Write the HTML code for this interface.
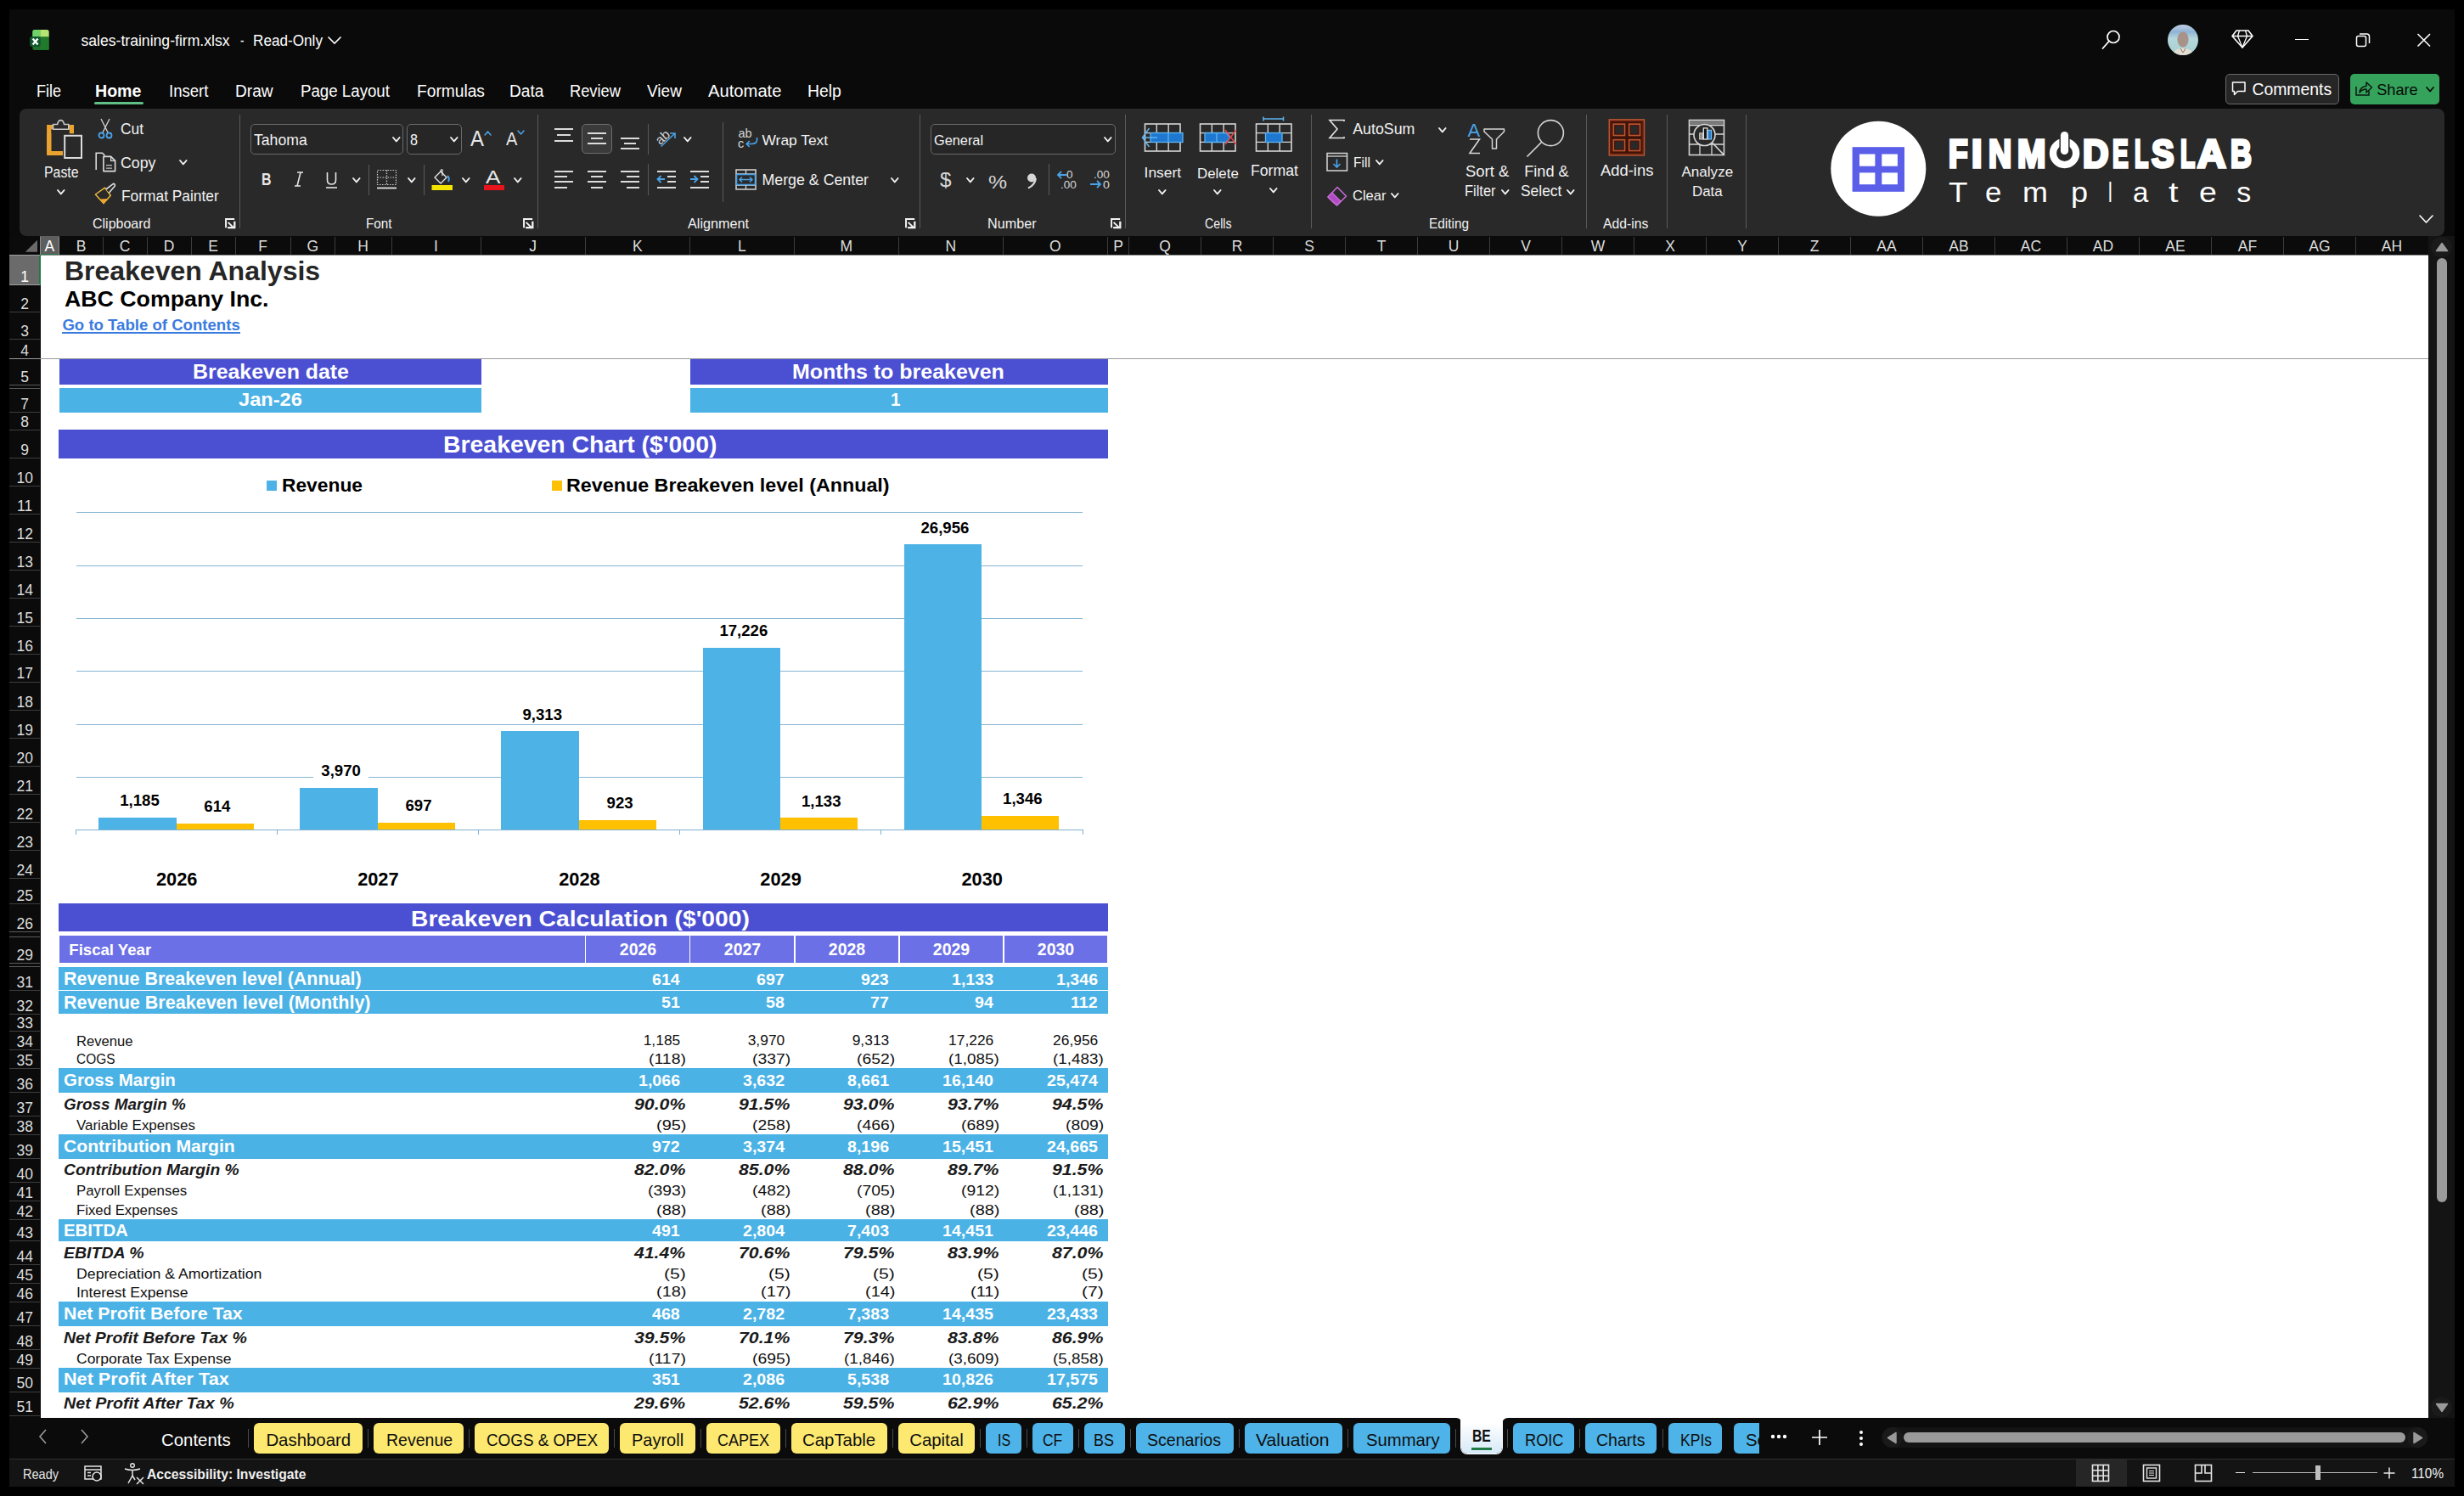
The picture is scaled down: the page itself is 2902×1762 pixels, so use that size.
<!DOCTYPE html>
<html><head><meta charset="utf-8"><title>sales-training-firm.xlsx</title>
<style>
html,body{margin:0;padding:0;width:2902px;height:1762px;overflow:hidden;background:#000;}
body{position:relative;font-family:"Liberation Sans",sans-serif;}
.t{position:absolute;white-space:nowrap;line-height:1;}
.r{position:absolute;}
.s{position:absolute;overflow:visible;}
</style></head><body>
<div class="r" style="left:11.00px;top:11.00px;width:2880.00px;height:1739.00px;background:#0a0a0a;"></div>
<svg class="s" style="left:34.00px;top:34.00px;" width="26.00" height="27.00" viewBox="0 0 26.00 27.00"><rect x="4.3" y="0.9" width="19.3" height="24" rx="2.5" fill="#1f6e2a"/><path d="M4.3 3.4 Q4.3 0.9 6.8 0.9 H13.3 V9.4 H4.3 Z" fill="#6fd36a"/><path d="M13.3 0.9 H21.1 Q23.6 0.9 23.6 3.4 V9.4 H13.3 Z" fill="#b5e673"/><rect x="13.3" y="9.4" width="10.3" height="15.5" fill="#217a2c"/><rect x="1.2" y="9" width="12.5" height="12" rx="2.2" fill="#10572f"/><path d="M4.6 11.4 L10.6 18.6 M10.6 11.4 L4.6 18.6" stroke="#f4fff6" stroke-width="2.4" stroke-linecap="butt"/></svg>
<div class="t" style="left:95.50px;top:39.80px;font-size:17.6px;color:#ffffff;">sales-training-firm.xlsx</div>
<div class="t" style="left:282.50px;top:39.80px;font-size:17.6px;color:#ffffff;transform-origin:0.00px 0;transform:scaleX(0.7632);">-</div>
<div class="t" style="left:298.40px;top:39.80px;font-size:17.6px;color:#ffffff;transform-origin:0.00px 0;transform:scaleX(0.9747);">Read-Only</div>
<svg class="s" style="left:384.00px;top:41.00px;" width="20.00" height="13.00" viewBox="0 0 20.00 13.00"><polyline points="2.5,2.5 10,10 17.5,2.5" fill="none" stroke="#fff" stroke-width="1.6"/></svg>
<svg class="s" style="left:2474.00px;top:34.00px;" width="25.00" height="26.00" viewBox="0 0 25.00 26.00"><circle cx="15" cy="9.5" r="7" fill="none" stroke="#fff" stroke-width="1.7"/><line x1="10" y1="14.5" x2="2.5" y2="23" stroke="#fff" stroke-width="1.8" stroke-linecap="round"/></svg>
<svg class="s" style="left:2552.00px;top:28.00px;" width="38.00" height="38.00" viewBox="0 0 38.00 38.00"><defs><clipPath id="avc"><circle cx="19" cy="19" r="18"/></clipPath><linearGradient id="avg" x1="0" y1="0" x2="0" y2="1"><stop offset="0" stop-color="#c9d3e6"/><stop offset="0.25" stop-color="#8fb3d6"/><stop offset="0.45" stop-color="#b4d6dc"/><stop offset="1" stop-color="#a6d0cf"/></linearGradient></defs><g clip-path="url(#avc)"><rect width="38" height="38" fill="url(#avg)"/><ellipse cx="19" cy="18.5" rx="6.6" ry="9.2" fill="#a8938a"/><path d="M6 38 Q8 29 19 28.5 Q30 29 32 38 Z" fill="#e2dcd2"/><path d="M16 29 L19 34 L22 29" fill="none" stroke="#8a7a6a" stroke-width="1"/></g></svg>
<svg class="s" style="left:2627.00px;top:33.00px;" width="28.00" height="26.00" viewBox="0 0 28.00 26.00"><path d="M7 3 H21 L26 9.5 L14 23 L2 9.5 Z" fill="none" stroke="#fff" stroke-width="1.6" stroke-linejoin="round"/><path d="M2 9.5 H26 M10.5 3 L8.5 9.5 L14 23 L19.5 9.5 L17.5 3" fill="none" stroke="#fff" stroke-width="1.3" stroke-linejoin="round"/></svg>
<div class="r" style="left:2703.00px;top:45.50px;width:15.50px;height:1.50px;background:#ffffff;"></div>
<svg class="s" style="left:2773.00px;top:37.00px;" width="20.00" height="20.00" viewBox="0 0 20.00 20.00"><rect x="2.5" y="5.5" width="11" height="12" rx="2" fill="none" stroke="#fff" stroke-width="1.5"/><path d="M6 3 H14.5 Q17.5 3 17.5 6 V14" fill="none" stroke="#fff" stroke-width="1.5"/></svg>
<svg class="s" style="left:2845.00px;top:38.00px;" width="20.00" height="19.00" viewBox="0 0 20.00 19.00"><path d="M2.5 2 L17 16.5 M17 2 L2.5 16.5" stroke="#fff" stroke-width="1.6"/></svg>
<div class="t" style="left:42.90px;top:98.17px;font-size:19.4px;color:#ffffff;transform-origin:0.00px 0;transform:scaleX(0.9317);">File</div>
<div class="t" style="left:111.70px;top:98.17px;font-size:19.4px;font-weight:bold;color:#ffffff;transform-origin:0.00px 0;transform:scaleX(1.0105);">Home</div>
<div class="t" style="left:198.75px;top:98.17px;font-size:19.4px;color:#ffffff;transform-origin:0.00px 0;transform:scaleX(0.9577);">Insert</div>
<div class="t" style="left:277.30px;top:98.17px;font-size:19.4px;color:#ffffff;transform-origin:0.00px 0;transform:scaleX(0.9868);">Draw</div>
<div class="t" style="left:353.60px;top:98.17px;font-size:19.4px;color:#ffffff;transform-origin:0.00px 0;transform:scaleX(0.9639);">Page Layout</div>
<div class="t" style="left:491.00px;top:98.17px;font-size:19.4px;color:#ffffff;transform-origin:0.00px 0;transform:scaleX(0.9889);">Formulas</div>
<div class="t" style="left:600.00px;top:98.17px;font-size:19.4px;color:#ffffff;transform-origin:0.00px 0;transform:scaleX(0.9846);">Data</div>
<div class="t" style="left:671.00px;top:98.17px;font-size:19.4px;color:#ffffff;transform-origin:0.00px 0;transform:scaleX(0.9429);">Review</div>
<div class="t" style="left:761.80px;top:98.17px;font-size:19.4px;color:#ffffff;transform-origin:0.00px 0;transform:scaleX(0.9806);">View</div>
<div class="t" style="left:834.00px;top:98.17px;font-size:19.4px;color:#ffffff;transform-origin:0.00px 0;transform:scaleX(1.0418);">Automate</div>
<div class="t" style="left:951.00px;top:98.17px;font-size:19.4px;color:#ffffff;">Help</div>
<div class="r" style="left:110.80px;top:120.20px;width:58.20px;height:2.80px;background:#5fbf85;border-radius:2px;"></div>
<div class="r" style="left:2620.80px;top:87.20px;width:134.50px;height:35.50px;background:#262626;border:1px solid #6a6a6a;border-radius:5px;box-sizing:border-box;"></div>
<svg class="s" style="left:2627.00px;top:94.00px;" width="20.00" height="22.00" viewBox="0 0 20.00 22.00"><path d="M2.5 3 H17 V13.5 H8.5 L4.5 17.5 V13.5 H2.5 Z" fill="none" stroke="#fff" stroke-width="1.5" stroke-linejoin="round"/></svg>
<div class="t" style="left:2652.40px;top:95.87px;font-size:19.4px;color:#ffffff;">Comments</div>
<div class="r" style="left:2768.00px;top:87.20px;width:105.10px;height:35.50px;background:#36a35c;border-radius:5px;"></div>
<svg class="s" style="left:2772.00px;top:93.00px;" width="24.00" height="22.00" viewBox="0 0 24.00 22.00"><path d="M3 9 V19 H18 V14" fill="none" stroke="#0a1a10" stroke-width="1.5"/><path d="M7 16 Q8 9 15 8.5 V4 L21.5 10 L15 16 V12 Q10 12 7 16 Z" fill="none" stroke="#0a1a10" stroke-width="1.5" stroke-linejoin="round"/></svg>
<div class="t" style="left:2799.20px;top:96.89px;font-size:18.2px;color:#050a07;">Share</div>
<svg class="s" style="left:2856.00px;top:101.25px;" width="12.00" height="8.50" viewBox="0 0 12.00 8.50"><polyline points="2,2 6.00,6.50 10.00,2" fill="none" stroke="#050a07" stroke-width="1.8" stroke-linecap="round" stroke-linejoin="round"/></svg>
<div class="r" style="left:23.00px;top:128.00px;width:2856.00px;height:150.00px;background:#292929;border-radius:8px;"></div>
<div class="r" style="left:282.00px;top:135.00px;width:1.00px;height:134.00px;background:#5a5a5a;"></div>
<div class="r" style="left:633.00px;top:135.00px;width:1.00px;height:134.00px;background:#5a5a5a;"></div>
<div class="r" style="left:1083.00px;top:135.00px;width:1.00px;height:134.00px;background:#5a5a5a;"></div>
<div class="r" style="left:1324.90px;top:135.00px;width:1.00px;height:134.00px;background:#5a5a5a;"></div>
<div class="r" style="left:1544.10px;top:135.00px;width:1.00px;height:134.00px;background:#5a5a5a;"></div>
<div class="r" style="left:1868.10px;top:135.00px;width:1.00px;height:134.00px;background:#5a5a5a;"></div>
<div class="r" style="left:1962.90px;top:135.00px;width:1.00px;height:134.00px;background:#5a5a5a;"></div>
<div class="r" style="left:2056.00px;top:135.00px;width:1.00px;height:134.00px;background:#5a5a5a;"></div>
<div class="t" style="left:108.80px;top:254.63px;font-size:16.5px;color:#f2f2f2;transform-origin:0.00px 0;transform:scaleX(0.9686);">Clipboard</div>
<div class="t" style="left:430.50px;top:254.63px;font-size:16.5px;color:#f2f2f2;transform-origin:0.00px 0;transform:scaleX(0.9242);">Font</div>
<div class="t" style="left:810.00px;top:254.63px;font-size:16.5px;color:#f2f2f2;transform-origin:0.00px 0;transform:scaleX(0.9817);">Alignment</div>
<div class="t" style="left:1163.40px;top:254.63px;font-size:16.5px;color:#f2f2f2;transform-origin:0.00px 0;transform:scaleX(0.9803);">Number</div>
<div class="t" style="left:1418.70px;top:254.63px;font-size:16.5px;color:#f2f2f2;transform-origin:0.00px 0;transform:scaleX(0.8607);">Cells</div>
<div class="t" style="left:1682.90px;top:254.63px;font-size:16.5px;color:#f2f2f2;transform-origin:0.00px 0;transform:scaleX(0.9309);">Editing</div>
<div class="t" style="left:1888.00px;top:254.63px;font-size:16.5px;color:#f2f2f2;transform-origin:0.00px 0;transform:scaleX(0.9529);">Add-ins</div>
<svg class="s" style="left:263.70px;top:255.60px;" width="16.00" height="16.00" viewBox="0 0 16.00 16.00"><path d="M2.05 12.35 V1.95 H12.15" fill="none" stroke="#f2f2f2" stroke-width="2"/><path d="M12.3 4.75 V12.2 H4.15" fill="none" stroke="#f2f2f2" stroke-width="2.3"/><path d="M4.65 5.85 L11.6 12.6" fill="none" stroke="#f2f2f2" stroke-width="2"/></svg>
<svg class="s" style="left:615.00px;top:256.00px;" width="16.00" height="16.00" viewBox="0 0 16.00 16.00"><path d="M2.05 12.35 V1.95 H12.15" fill="none" stroke="#f2f2f2" stroke-width="2"/><path d="M12.3 4.75 V12.2 H4.15" fill="none" stroke="#f2f2f2" stroke-width="2.3"/><path d="M4.65 5.85 L11.6 12.6" fill="none" stroke="#f2f2f2" stroke-width="2"/></svg>
<svg class="s" style="left:1065.00px;top:256.00px;" width="16.00" height="16.00" viewBox="0 0 16.00 16.00"><path d="M2.05 12.35 V1.95 H12.15" fill="none" stroke="#f2f2f2" stroke-width="2"/><path d="M12.3 4.75 V12.2 H4.15" fill="none" stroke="#f2f2f2" stroke-width="2.3"/><path d="M4.65 5.85 L11.6 12.6" fill="none" stroke="#f2f2f2" stroke-width="2"/></svg>
<svg class="s" style="left:1307.00px;top:256.00px;" width="16.00" height="16.00" viewBox="0 0 16.00 16.00"><path d="M2.05 12.35 V1.95 H12.15" fill="none" stroke="#f2f2f2" stroke-width="2"/><path d="M12.3 4.75 V12.2 H4.15" fill="none" stroke="#f2f2f2" stroke-width="2.3"/><path d="M4.65 5.85 L11.6 12.6" fill="none" stroke="#f2f2f2" stroke-width="2"/></svg>
<svg class="s" style="left:50.00px;top:136.00px;" width="50.00" height="54.00" viewBox="0 0 50.00 54.00"><path d="M7.7 21.3 V44.5 H24" fill="none" stroke="#eba32f" stroke-width="5.2"/><path d="M7.7 44.5 V13.6 H14 M31 13.6 H34.4 V21.3" fill="none" stroke="#eba32f" stroke-width="5.2"/><path d="M12.5 16.3 V10.5 H17.6 Q18.5 5.6 21.6 5.6 Q24.7 5.6 25.6 10.5 H30.8 V16.3 Z" fill="#292929" stroke="#c8c8c8" stroke-width="1.6" stroke-linejoin="round"/><rect x="26.2" y="23.8" width="19.8" height="26.2" fill="#292929" stroke="#dcdcdc" stroke-width="2"/></svg>
<div class="t" style="left:51.50px;top:194.68px;font-size:17.5px;color:#f2f2f2;transform-origin:0.00px 0;transform:scaleX(0.9058);">Paste</div>
<svg class="s" style="left:65.70px;top:222.30px;" width="11.60" height="8.40" viewBox="0 0 11.60 8.40"><polyline points="2,2 5.80,6.40 9.60,2" fill="none" stroke="#f2f2f2" stroke-width="1.9" stroke-linecap="round" stroke-linejoin="round"/></svg>
<svg class="s" style="left:113.00px;top:138.00px;" width="22.00" height="28.00" viewBox="0 0 22.00 28.00"><path d="M6 2 L14 18 M16 2 L8 18" stroke="#d6d6d6" stroke-width="1.3"/><circle cx="6.5" cy="21.5" r="3" fill="none" stroke="#4aa3e8" stroke-width="1.8"/><circle cx="15.5" cy="21.5" r="3" fill="none" stroke="#4aa3e8" stroke-width="1.8"/></svg>
<div class="t" style="left:142.00px;top:144.18px;font-size:17.5px;color:#f2f2f2;transform-origin:0.00px 0;transform:scaleX(0.9922);">Cut</div>
<svg class="s" style="left:110.00px;top:177.00px;" width="28.00" height="28.00" viewBox="0 0 28.00 28.00"><path d="M3.2 23 V3.2 H10.5 L13.5 6.2" fill="none" stroke="#dcdcdc" stroke-width="1.6"/><path d="M11.9 7.4 H20.6 L25.6 12.4 V24.6 H11.9 Z" fill="#292929" stroke="#dcdcdc" stroke-width="1.6" stroke-linejoin="round"/><path d="M20.6 7.4 V12.4 H25.6" fill="none" stroke="#dcdcdc" stroke-width="1.2"/><path d="M15 17.7 H22 M15 21.1 H22" stroke="#bdbdbd" stroke-width="1.3"/></svg>
<div class="t" style="left:142.00px;top:183.78px;font-size:17.5px;color:#f2f2f2;transform-origin:0.00px 0;transform:scaleX(1.0156);">Copy</div>
<svg class="s" style="left:209.60px;top:186.80px;" width="11.60" height="8.40" viewBox="0 0 11.60 8.40"><polyline points="2,2 5.80,6.40 9.60,2" fill="none" stroke="#f2f2f2" stroke-width="1.9" stroke-linecap="round" stroke-linejoin="round"/></svg>
<svg class="s" style="left:108.00px;top:214.00px;" width="30.00" height="30.00" viewBox="0 0 30.00 30.00"><path d="M4.4 15 L15.5 7.1 L22.3 16.2 L14 25.6 Z" fill="#292929" stroke="#f0b93c" stroke-width="1.5" stroke-linejoin="round"/><path d="M9 20.5 L18.8 20 L14 25.6 Z" fill="#eba32f"/><path d="M16.8 9 L25.5 2.4 Q27.6 2.4 27.3 4.9 L20.5 13" fill="#292929" stroke="#dcdcdc" stroke-width="1.6" stroke-linejoin="round"/></svg>
<div class="t" style="left:142.60px;top:222.68px;font-size:17.5px;color:#f2f2f2;transform-origin:0.00px 0;transform:scaleX(0.9917);">Format Painter</div>
<div class="r" style="left:295.30px;top:146.40px;width:180.20px;height:35.50px;background:#262626;border:1px solid #6a6a6a;border-radius:5px;box-sizing:border-box;"></div>
<div class="t" style="left:299.00px;top:156.64px;font-size:17.9px;color:#f2f2f2;transform-origin:0.00px 0;transform:scaleX(0.9855);">Tahoma</div>
<svg class="s" style="left:461.20px;top:160.30px;" width="11.60" height="8.40" viewBox="0 0 11.60 8.40"><polyline points="2,2 5.80,6.40 9.60,2" fill="none" stroke="#f2f2f2" stroke-width="1.9" stroke-linecap="round" stroke-linejoin="round"/></svg>
<div class="r" style="left:479.40px;top:146.40px;width:64.30px;height:35.50px;background:#262626;border:1px solid #6a6a6a;border-radius:5px;box-sizing:border-box;"></div>
<div class="t" style="left:482.50px;top:156.64px;font-size:17.9px;color:#f2f2f2;transform-origin:0.00px 0;transform:scaleX(0.9059);">8</div>
<svg class="s" style="left:529.20px;top:160.30px;" width="11.60" height="8.40" viewBox="0 0 11.60 8.40"><polyline points="2,2 5.80,6.40 9.60,2" fill="none" stroke="#f2f2f2" stroke-width="1.9" stroke-linecap="round" stroke-linejoin="round"/></svg>
<div class="t" style="left:554.00px;top:149.59px;font-size:26px;color:#e6e6e6;transform-origin:0.00px 0;transform:scaleX(0.9185);">A</div>
<svg class="s" style="left:568.50px;top:152.50px;" width="11.00" height="8.00" viewBox="0 0 11.00 8.00"><polyline points="2,6 5.50,2 9.00,6" fill="none" stroke="#4aa3e8" stroke-width="1.5" stroke-linecap="round" stroke-linejoin="round"/></svg>
<div class="t" style="left:595.60px;top:152.97px;font-size:22px;color:#e6e6e6;transform-origin:0.00px 0;transform:scaleX(0.9091);">A</div>
<svg class="s" style="left:608.00px;top:151.50px;" width="11.00" height="8.00" viewBox="0 0 11.00 8.00"><polyline points="2,2 5.50,6.00 9.00,2" fill="none" stroke="#4aa3e8" stroke-width="1.5" stroke-linecap="round" stroke-linejoin="round"/></svg>
<div class="t" style="left:307.50px;top:201.47px;font-size:20px;font-weight:bold;color:#e6e6e6;transform-origin:0.00px 0;transform:scaleX(0.7986);">B</div>
<svg class="s" style="left:345.00px;top:201.00px;" width="14.00" height="20.00" viewBox="0 0 14.00 20.00"><path d="M5 2 H12 M2 18 H9 M9 2 L5 18" fill="none" stroke="#e6e6e6" stroke-width="1.6"/></svg>
<svg class="s" style="left:382.00px;top:201.00px;" width="17.00" height="22.00" viewBox="0 0 17.00 22.00"><path d="M3.5 2 V11 Q3.5 16 8.5 16 Q13.5 16 13.5 11 V2" fill="none" stroke="#e6e6e6" stroke-width="1.6"/><path d="M2 20 H15" stroke="#e6e6e6" stroke-width="1.6"/></svg>
<svg class="s" style="left:413.70px;top:208.30px;" width="11.60" height="8.40" viewBox="0 0 11.60 8.40"><polyline points="2,2 5.80,6.40 9.60,2" fill="none" stroke="#f2f2f2" stroke-width="1.9" stroke-linecap="round" stroke-linejoin="round"/></svg>
<div class="r" style="left:433.90px;top:194.00px;width:1.00px;height:36.00px;background:#5a5a5a;"></div>
<svg class="s" style="left:442.00px;top:198.00px;" width="27.00" height="27.00" viewBox="0 0 27.00 27.00"><rect x="2.5" y="2.5" width="22" height="17" fill="none" stroke="#cfcfcf" stroke-width="1.2" stroke-dasharray="1.5 1.5"/><path d="M13.5 2.5 V19.5 M2.5 11 H24.5" stroke="#cfcfcf" stroke-width="1.2" stroke-dasharray="1.5 1.5"/><path d="M2 23.5 H25" stroke="#e6e6e6" stroke-width="1.8"/></svg>
<svg class="s" style="left:478.50px;top:208.30px;" width="11.60" height="8.40" viewBox="0 0 11.60 8.40"><polyline points="2,2 5.80,6.40 9.60,2" fill="none" stroke="#f2f2f2" stroke-width="1.9" stroke-linecap="round" stroke-linejoin="round"/></svg>
<div class="r" style="left:499.10px;top:194.00px;width:1.00px;height:36.00px;background:#5a5a5a;"></div>
<svg class="s" style="left:506.00px;top:198.00px;" width="30.00" height="28.00" viewBox="0 0 30.00 28.00"><path d="M6 11 L13 4 L20 11 L13 18 Z" fill="none" stroke="#e6e6e6" stroke-width="1.4" stroke-linejoin="round"/><path d="M13 4 Q13 1 15 2 V9" fill="none" stroke="#e6e6e6" stroke-width="1.2"/><path d="M21 9 Q24 12 22 16" fill="none" stroke="#4aa3e8" stroke-width="2"/><rect x="2.5" y="20" width="24.5" height="6" fill="#f5e400"/></svg>
<svg class="s" style="left:543.20px;top:208.30px;" width="11.60" height="8.40" viewBox="0 0 11.60 8.40"><polyline points="2,2 5.80,6.40 9.60,2" fill="none" stroke="#f2f2f2" stroke-width="1.9" stroke-linecap="round" stroke-linejoin="round"/></svg>
<div class="t" style="left:571.50px;top:197.87px;font-size:22px;color:#e6e6e6;transform-origin:0.00px 0;transform:scaleX(1.1872);">A</div>
<div class="r" style="left:570.00px;top:217.70px;width:24.00px;height:6.50px;background:#e8141c;"></div>
<svg class="s" style="left:604.20px;top:208.30px;" width="11.60" height="8.40" viewBox="0 0 11.60 8.40"><polyline points="2,2 5.80,6.40 9.60,2" fill="none" stroke="#f2f2f2" stroke-width="1.9" stroke-linecap="round" stroke-linejoin="round"/></svg>
<div class="r" style="left:653.00px;top:151.00px;width:22.00px;height:2.00px;background:#dcdcdc;"></div>
<div class="r" style="left:656.00px;top:158.00px;width:16.00px;height:2.00px;background:#dcdcdc;"></div>
<div class="r" style="left:653.00px;top:165.00px;width:22.00px;height:2.00px;background:#dcdcdc;"></div>
<div class="r" style="left:685.40px;top:146.20px;width:35.60px;height:35.10px;background:#3a3a3a;border:1px solid #6e6e6e;border-radius:5px;box-sizing:border-box;"></div>
<div class="r" style="left:692.00px;top:156.00px;width:22.00px;height:2.00px;background:#dcdcdc;"></div>
<div class="r" style="left:696.00px;top:162.00px;width:14.00px;height:2.00px;background:#dcdcdc;"></div>
<div class="r" style="left:692.00px;top:168.00px;width:22.00px;height:2.00px;background:#dcdcdc;"></div>
<div class="r" style="left:731.00px;top:162.00px;width:22.00px;height:2.00px;background:#dcdcdc;"></div>
<div class="r" style="left:735.00px;top:168.00px;width:14.00px;height:2.00px;background:#dcdcdc;"></div>
<div class="r" style="left:731.00px;top:174.00px;width:22.00px;height:2.00px;background:#dcdcdc;"></div>
<div class="r" style="left:763.00px;top:146.00px;width:1.00px;height:36.00px;background:#5a5a5a;"></div>
<svg class="s" style="left:770.00px;top:148.00px;" width="32.00" height="30.00" viewBox="0 0 32.00 30.00"><text x="1" y="19.5" font-family="Liberation Sans" font-size="15.5" fill="#d6d6d6" transform="rotate(-42 9 13)">ab</text><path d="M8.5 24.5 L25 9 M19 9 H25 V15" fill="none" stroke="#4aa3e8" stroke-width="1.6"/></svg>
<svg class="s" style="left:804.20px;top:159.80px;" width="11.60" height="8.40" viewBox="0 0 11.60 8.40"><polyline points="2,2 5.80,6.40 9.60,2" fill="none" stroke="#f2f2f2" stroke-width="1.9" stroke-linecap="round" stroke-linejoin="round"/></svg>
<div class="r" style="left:851.10px;top:144.00px;width:1.00px;height:94.00px;background:#5a5a5a;"></div>
<svg class="s" style="left:868.00px;top:150.00px;" width="28.00" height="28.00" viewBox="0 0 28.00 28.00"><text x="1.5" y="12" font-family="Liberation Sans" font-size="14.5" fill="#d6d6d6">ab</text><text x="1" y="23.5" font-family="Liberation Sans" font-size="14.5" fill="#d6d6d6">c</text><path d="M23.5 12 Q25 19.5 17 19.5 H11.5 M14.8 16 L11.3 19.5 L14.8 23" fill="none" stroke="#4aa3e8" stroke-width="1.7"/></svg>
<div class="t" style="left:897.50px;top:156.77px;font-size:17.4px;color:#f2f2f2;">Wrap Text</div>
<div class="r" style="left:653.00px;top:201.00px;width:22.00px;height:2.00px;background:#dcdcdc;"></div>
<div class="r" style="left:653.00px;top:207.00px;width:15.00px;height:2.00px;background:#dcdcdc;"></div>
<div class="r" style="left:653.00px;top:213.00px;width:22.00px;height:2.00px;background:#dcdcdc;"></div>
<div class="r" style="left:653.00px;top:220.00px;width:15.00px;height:2.00px;background:#dcdcdc;"></div>
<div class="r" style="left:692.00px;top:201.00px;width:22.00px;height:2.00px;background:#dcdcdc;"></div>
<div class="r" style="left:696.00px;top:207.00px;width:14.00px;height:2.00px;background:#dcdcdc;"></div>
<div class="r" style="left:692.00px;top:213.00px;width:22.00px;height:2.00px;background:#dcdcdc;"></div>
<div class="r" style="left:696.00px;top:220.00px;width:14.00px;height:2.00px;background:#dcdcdc;"></div>
<div class="r" style="left:731.00px;top:201.00px;width:22.00px;height:2.00px;background:#dcdcdc;"></div>
<div class="r" style="left:738.00px;top:207.00px;width:15.00px;height:2.00px;background:#dcdcdc;"></div>
<div class="r" style="left:731.00px;top:213.00px;width:22.00px;height:2.00px;background:#dcdcdc;"></div>
<div class="r" style="left:738.00px;top:220.00px;width:15.00px;height:2.00px;background:#dcdcdc;"></div>
<div class="r" style="left:763.00px;top:193.00px;width:1.00px;height:37.00px;background:#5a5a5a;"></div>
<div class="r" style="left:774.00px;top:201.00px;width:22.00px;height:2.00px;background:#dcdcdc;"></div>
<div class="r" style="left:774.00px;top:220.00px;width:22.00px;height:2.00px;background:#dcdcdc;"></div>
<div class="r" style="left:786.00px;top:207.00px;width:10.00px;height:2.00px;background:#dcdcdc;"></div>
<div class="r" style="left:786.00px;top:213.00px;width:10.00px;height:2.00px;background:#dcdcdc;"></div>
<svg class="s" style="left:772.00px;top:205.00px;" width="14.00" height="12.00" viewBox="0 0 14.00 12.00"><path d="M11 6 H2.5 M6.5 2 L2.5 6 L6.5 10" fill="none" stroke="#4aa3e8" stroke-width="1.8"/></svg>
<div class="r" style="left:813.00px;top:201.00px;width:22.00px;height:2.00px;background:#dcdcdc;"></div>
<div class="r" style="left:813.00px;top:220.00px;width:22.00px;height:2.00px;background:#dcdcdc;"></div>
<div class="r" style="left:825.00px;top:207.00px;width:10.00px;height:2.00px;background:#dcdcdc;"></div>
<div class="r" style="left:825.00px;top:213.00px;width:10.00px;height:2.00px;background:#dcdcdc;"></div>
<svg class="s" style="left:811.00px;top:205.00px;" width="14.00" height="12.00" viewBox="0 0 14.00 12.00"><path d="M2 6 H10.5 M6.5 2 L10.5 6 L6.5 10" fill="none" stroke="#4aa3e8" stroke-width="1.8"/></svg>
<svg class="s" style="left:865.00px;top:198.00px;" width="27.00" height="27.00" viewBox="0 0 27.00 27.00"><rect x="2" y="2" width="23" height="23" fill="none" stroke="#d6d6d6" stroke-width="1.5"/><path d="M2 7 H25 M2 20 H25 M13.5 2 V7 M13.5 20 V25" stroke="#d6d6d6" stroke-width="1.3"/><rect x="2.5" y="7.5" width="22" height="12" fill="none" stroke="#4aa3e8" stroke-width="1.6"/><path d="M6 13.5 H21 M9 10.5 L6 13.5 L9 16.5 M18 10.5 L21 13.5 L18 16.5" fill="none" stroke="#4aa3e8" stroke-width="1.5"/></svg>
<div class="t" style="left:897.50px;top:204.23px;font-size:17.8px;color:#f2f2f2;">Merge &amp; Center</div>
<svg class="s" style="left:1047.90px;top:208.30px;" width="11.60" height="8.40" viewBox="0 0 11.60 8.40"><polyline points="2,2 5.80,6.40 9.60,2" fill="none" stroke="#f2f2f2" stroke-width="1.9" stroke-linecap="round" stroke-linejoin="round"/></svg>
<div class="r" style="left:1096.00px;top:146.40px;width:217.70px;height:35.30px;background:#262626;border:1px solid #6a6a6a;border-radius:5px;box-sizing:border-box;"></div>
<div class="t" style="left:1099.50px;top:157.11px;font-size:17px;color:#f2f2f2;transform-origin:0.00px 0;transform:scaleX(0.9600);">General</div>
<svg class="s" style="left:1299.20px;top:160.30px;" width="11.60" height="8.40" viewBox="0 0 11.60 8.40"><polyline points="2,2 5.80,6.40 9.60,2" fill="none" stroke="#f2f2f2" stroke-width="1.9" stroke-linecap="round" stroke-linejoin="round"/></svg>
<div class="t" style="left:1106.50px;top:200.18px;font-size:24px;color:#d6d6d6;transform-origin:0.00px 0;transform:scaleX(1.0135);">$</div>
<svg class="s" style="left:1136.50px;top:208.10px;" width="11.60" height="8.40" viewBox="0 0 11.60 8.40"><polyline points="2,2 5.80,6.40 9.60,2" fill="none" stroke="#f2f2f2" stroke-width="1.9" stroke-linecap="round" stroke-linejoin="round"/></svg>
<div class="t" style="left:1163.90px;top:203.87px;font-size:22px;color:#d6d6d6;transform-origin:0.00px 0;transform:scaleX(1.1287);">%</div>
<svg class="s" style="left:1206.00px;top:200.00px;" width="18.00" height="24.00" viewBox="0 0 18.00 24.00"><circle cx="9" cy="9.5" r="5" fill="#d6d6d6"/><path d="M13.8 10 Q13 18 5 21.5" fill="none" stroke="#d6d6d6" stroke-width="2.4"/></svg>
<div class="r" style="left:1234.80px;top:193.00px;width:1.00px;height:37.00px;background:#5a5a5a;"></div>
<div class="t" style="left:1256.00px;top:200.42px;font-size:12.5px;color:#d6d6d6;transform-origin:0.00px 0;transform:scaleX(1.0811);">0</div>
<div class="t" style="left:1249.00px;top:212.42px;font-size:12.5px;color:#d6d6d6;transform-origin:0.00px 0;transform:scaleX(1.0820);">.00</div>
<svg class="s" style="left:1243.00px;top:200.00px;" width="16.00" height="12.00" viewBox="0 0 16.00 12.00"><path d="M14 6 H3 M7 2 L3 6 L7 10" fill="none" stroke="#4aa3e8" stroke-width="1.8"/></svg>
<div class="t" style="left:1288.00px;top:200.42px;font-size:12.5px;color:#d6d6d6;transform-origin:0.00px 0;transform:scaleX(1.0878);">.00</div>
<div class="t" style="left:1299.00px;top:212.42px;font-size:12.5px;color:#d6d6d6;transform-origin:0.00px 0;transform:scaleX(1.1387);">0</div>
<svg class="s" style="left:1282.00px;top:211.00px;" width="18.00" height="12.00" viewBox="0 0 18.00 12.00"><path d="M2 6 H14 M10 2 L14 6 L10 10" fill="none" stroke="#4aa3e8" stroke-width="1.8"/></svg>
<svg class="s" style="left:1343.00px;top:143.00px;" width="53.00" height="38.00" viewBox="0 0 53.00 38.00"><rect x="5.5" y="3" width="41.5" height="32" fill="none" stroke="#d6d6d6" stroke-width="1.6"/><path d="M19.33 3 V35 M5.5 13.67 H47.0" stroke="#d6d6d6" stroke-width="1.4"/><path d="M33.17 3 V35 M5.5 24.33 H47.0" stroke="#d6d6d6" stroke-width="1.4"/><rect x="12" y="13.5" width="38" height="11" fill="#1e78d0" stroke="#5fb4f0" stroke-width="1.3"/><path d="M33 13.5 V24.5" stroke="#5fb4f0" stroke-width="1.3"/><path d="M20 19 H3 M10.5 8 L2.5 19 L10.5 30" fill="none" stroke="#5fb4f0" stroke-width="1.5"/></svg>
<div class="t" style="left:1347.60px;top:195.27px;font-size:17.4px;color:#f2f2f2;">Insert</div>
<svg class="s" style="left:1362.80px;top:221.80px;" width="11.60" height="8.40" viewBox="0 0 11.60 8.40"><polyline points="2,2 5.80,6.40 9.60,2" fill="none" stroke="#f2f2f2" stroke-width="1.9" stroke-linecap="round" stroke-linejoin="round"/></svg>
<svg class="s" style="left:1411.00px;top:143.00px;" width="50.00" height="38.00" viewBox="0 0 50.00 38.00"><rect x="2.5" y="3" width="41.5" height="32" fill="none" stroke="#d6d6d6" stroke-width="1.6"/><path d="M16.33 3 V35 M2.5 13.67 H44.0" stroke="#d6d6d6" stroke-width="1.4"/><path d="M30.17 3 V35 M2.5 24.33 H44.0" stroke="#d6d6d6" stroke-width="1.4"/><path d="M8 13.5 H33 L38 19 L33 24.5 H8 Z" fill="#1e78d0" stroke="#5fb4f0" stroke-width="1.3"/><path d="M22 13.5 V24.5" stroke="#5fb4f0" stroke-width="1.3"/><path d="M32 10 L45 27 M45 10 L32 27" stroke="#e0454a" stroke-width="1.6"/></svg>
<div class="t" style="left:1410.00px;top:195.61px;font-size:17px;color:#f2f2f2;transform-origin:0.00px 0;transform:scaleX(0.9933);">Delete</div>
<svg class="s" style="left:1427.50px;top:221.80px;" width="11.60" height="8.40" viewBox="0 0 11.60 8.40"><polyline points="2,2 5.80,6.40 9.60,2" fill="none" stroke="#f2f2f2" stroke-width="1.9" stroke-linecap="round" stroke-linejoin="round"/></svg>
<svg class="s" style="left:1477.00px;top:137.00px;" width="46.00" height="44.00" viewBox="0 0 46.00 44.00"><rect x="2.5" y="9" width="41.5" height="32" fill="none" stroke="#d6d6d6" stroke-width="1.6"/><path d="M16.33 9 V41 M2.5 19.67 H44.0" stroke="#d6d6d6" stroke-width="1.4"/><path d="M30.17 9 V41 M2.5 30.33 H44.0" stroke="#d6d6d6" stroke-width="1.4"/><rect x="13.5" y="19.5" width="19.5" height="11" fill="#1e78d0" stroke="#5fb4f0" stroke-width="1.3"/><path d="M11 3 H34.5 M11 0.5 V5.5 M34.5 0.5 V5.5" stroke="#5fb4f0" stroke-width="1.5"/></svg>
<div class="t" style="left:1472.90px;top:192.71px;font-size:17.7px;color:#f2f2f2;">Format</div>
<svg class="s" style="left:1493.60px;top:220.00px;" width="11.60" height="8.40" viewBox="0 0 11.60 8.40"><polyline points="2,2 5.80,6.40 9.60,2" fill="none" stroke="#f2f2f2" stroke-width="1.9" stroke-linecap="round" stroke-linejoin="round"/></svg>
<svg class="s" style="left:1563.00px;top:139.00px;" width="24.00" height="26.00" viewBox="0 0 24.00 26.00"><path d="M20 4 V2.5 H3 L12 13 L3 23.5 H20 V22" fill="none" stroke="#e6e6e6" stroke-width="1.6" stroke-linejoin="miter"/></svg>
<div class="t" style="left:1593.20px;top:143.73px;font-size:17.8px;color:#f2f2f2;">AutoSum</div>
<svg class="s" style="left:1693.20px;top:148.50px;" width="11.60" height="8.40" viewBox="0 0 11.60 8.40"><polyline points="2,2 5.80,6.40 9.60,2" fill="none" stroke="#f2f2f2" stroke-width="1.9" stroke-linecap="round" stroke-linejoin="round"/></svg>
<svg class="s" style="left:1561.00px;top:178.00px;" width="28.00" height="26.00" viewBox="0 0 28.00 26.00"><rect x="2" y="2.5" width="23.5" height="20.5" fill="none" stroke="#d6d6d6" stroke-width="1.5"/><path d="M2 6 H25.5" stroke="#d6d6d6" stroke-width="1.3"/><path d="M13.5 9.5 V19 M9.5 15 L13.5 19 L17.5 15" fill="none" stroke="#4aa3e8" stroke-width="1.7"/></svg>
<div class="t" style="left:1594.00px;top:182.81px;font-size:17px;color:#f2f2f2;transform-origin:0.00px 0;transform:scaleX(0.9135);">Fill</div>
<svg class="s" style="left:1618.60px;top:186.80px;" width="11.60" height="8.40" viewBox="0 0 11.60 8.40"><polyline points="2,2 5.80,6.40 9.60,2" fill="none" stroke="#f2f2f2" stroke-width="1.9" stroke-linecap="round" stroke-linejoin="round"/></svg>
<svg class="s" style="left:1561.00px;top:217.00px;" width="28.00" height="27.00" viewBox="0 0 28.00 27.00"><path d="M3 15 L9.5 21.5 L13.5 25 L24.5 14 L14 3.5 Z" fill="none" stroke="#c76bd6" stroke-width="1.6" stroke-linejoin="round"/><path d="M3 15 L8 10 L18 20 L13.5 24.5 Z" fill="#b04bc4" stroke="#c76bd6" stroke-width="1.2" stroke-linejoin="round"/></svg>
<div class="t" style="left:1593.00px;top:222.41px;font-size:17px;color:#f2f2f2;transform-origin:0.00px 0;transform:scaleX(0.9722);">Clear</div>
<svg class="s" style="left:1636.80px;top:226.40px;" width="11.60" height="8.40" viewBox="0 0 11.60 8.40"><polyline points="2,2 5.80,6.40 9.60,2" fill="none" stroke="#f2f2f2" stroke-width="1.9" stroke-linecap="round" stroke-linejoin="round"/></svg>
<svg class="s" style="left:1727.00px;top:140.00px;" width="48.00" height="44.00" viewBox="0 0 48.00 44.00"><text x="1.5" y="21" font-family="Liberation Sans" font-size="22" fill="#4aa3e8">A</text><path d="M4 24 H15.5 L4 40.5 H16" fill="none" stroke="#d6d6d6" stroke-width="1.6"/><path d="M21 12 H44.5 V15 L35.5 24 V35 H30.5 V24 L21 15 Z" fill="none" stroke="#d6d6d6" stroke-width="1.5" stroke-linejoin="round"/></svg>
<div class="t" style="left:1725.70px;top:192.71px;font-size:18.3px;color:#f2f2f2;transform-origin:0.00px 0;transform:scaleX(1.0084);">Sort &amp;</div>
<div class="t" style="left:1725.00px;top:217.38px;font-size:17.5px;color:#f2f2f2;transform-origin:0.00px 0;transform:scaleX(0.9395);">Filter</div>
<svg class="s" style="left:1766.70px;top:221.80px;" width="11.60" height="8.40" viewBox="0 0 11.60 8.40"><polyline points="2,2 5.80,6.40 9.60,2" fill="none" stroke="#f2f2f2" stroke-width="1.9" stroke-linecap="round" stroke-linejoin="round"/></svg>
<svg class="s" style="left:1795.00px;top:139.00px;" width="50.00" height="50.00" viewBox="0 0 50.00 50.00"><circle cx="31.4" cy="17.6" r="15" fill="none" stroke="#d6d6d6" stroke-width="1.6"/><path d="M20.5 28.5 L3.5 45.5" stroke="#d6d6d6" stroke-width="1.7"/></svg>
<div class="t" style="left:1795.20px;top:192.79px;font-size:18.2px;color:#f2f2f2;">Find &amp;</div>
<div class="t" style="left:1790.60px;top:217.13px;font-size:17.8px;color:#f2f2f2;transform-origin:0.00px 0;transform:scaleX(0.9781);">Select</div>
<svg class="s" style="left:1844.20px;top:221.80px;" width="11.60" height="8.40" viewBox="0 0 11.60 8.40"><polyline points="2,2 5.80,6.40 9.60,2" fill="none" stroke="#f2f2f2" stroke-width="1.9" stroke-linecap="round" stroke-linejoin="round"/></svg>
<svg class="s" style="left:1893.00px;top:138.00px;" width="47.00" height="48.00" viewBox="0 0 47.00 48.00"><rect x="2.4" y="3" width="41" height="41.7" fill="#3a1208" stroke="#bd5430" stroke-width="1.7"/><rect x="4.4" y="5" width="37" height="37.7" fill="none" stroke="#5c1c0c" stroke-width="1.6"/><rect x="7.3" y="8.2" width="13.2" height="13.3" fill="#292929" stroke="#bd5430" stroke-width="1.7"/><rect x="9.0" y="9.9" width="9.799999999999999" height="9.9" fill="none" stroke="#4a160a" stroke-width="1.2"/><rect x="25.7" y="8.2" width="12.8" height="13.3" fill="#292929" stroke="#bd5430" stroke-width="1.7"/><rect x="27.4" y="9.9" width="9.4" height="9.9" fill="none" stroke="#4a160a" stroke-width="1.2"/><rect x="7.3" y="26.7" width="13.2" height="12.8" fill="#292929" stroke="#bd5430" stroke-width="1.7"/><rect x="9.0" y="28.4" width="9.799999999999999" height="9.4" fill="none" stroke="#4a160a" stroke-width="1.2"/><rect x="25.7" y="26.7" width="12.8" height="12.8" fill="#292929" stroke="#bd5430" stroke-width="1.7"/><rect x="27.4" y="28.4" width="9.4" height="9.4" fill="none" stroke="#4a160a" stroke-width="1.2"/></svg>
<div class="t" style="left:1885.00px;top:191.92px;font-size:18.4px;color:#f2f2f2;">Add-ins</div>
<svg class="s" style="left:1987.00px;top:139.00px;" width="48.00" height="48.00" viewBox="0 0 48.00 48.00"><rect x="2.5" y="2.5" width="41" height="41" fill="none" stroke="#d6d6d6" stroke-width="1.6"/><rect x="3" y="3" width="40" height="4.5" fill="#7a7a7a"/><path d="M2.5 8.5 H43.5 M2.5 19 H43.5 M2.5 31 H43.5 M15 31 V43.5 M29 31 V43.5" stroke="#d6d6d6" stroke-width="1.3"/><circle cx="20.5" cy="20" r="12.5" fill="#292929" stroke="#d6d6d6" stroke-width="1.6"/><path d="M29.5 29 L43 43" stroke="#d6d6d6" stroke-width="1.8"/><rect x="14.6" y="17.8" width="4" height="7.2" fill="#8a8a8a" stroke="#d0d0d0" stroke-width="0.9"/><rect x="19.3" y="11.9" width="4.5" height="13.1" fill="#1a1a1a" stroke="#e6e6e6" stroke-width="1.3"/><rect x="24.6" y="14.3" width="4" height="10.7" fill="#1e7fd6" stroke="#8ecbf5" stroke-width="1"/></svg>
<div class="t" style="left:1980.40px;top:194.02px;font-size:17.1px;color:#f2f2f2;">Analyze</div>
<div class="t" style="left:1993.00px;top:217.59px;font-size:16.9px;color:#f2f2f2;">Data</div>
<svg class="s" style="left:2155.00px;top:141.00px;" width="115.00" height="116.00" viewBox="0 0 115.00 116.00"><circle cx="57.3" cy="57.7" r="56" fill="#ffffff"/><rect x="26.6" y="32.2" width="61.4" height="52.6" fill="#5a5ee8"/><rect x="35" y="40.5" width="18.4" height="14.2" fill="#fff"/><rect x="61.3" y="40.5" width="18.6" height="14.2" fill="#fff"/><rect x="35" y="62.4" width="18.4" height="13.8" fill="#fff"/><rect x="61.3" y="62.4" width="18.6" height="13.8" fill="#fff"/></svg>
<div class="t" style="left:2295.30px;top:157.41px;font-size:47px;font-weight:bold;color:#ffffff;transform-origin:0.00px 0;transform:scaleX(0.7883);-webkit-text-stroke:3.6px #fff;">F</div>
<div class="t" style="left:2321.50px;top:157.41px;font-size:47px;font-weight:bold;color:#ffffff;transform-origin:0.00px 0;transform:scaleX(0.9574);-webkit-text-stroke:3.6px #fff;">I</div>
<div class="t" style="left:2341.60px;top:157.41px;font-size:47px;font-weight:bold;color:#ffffff;transform-origin:0.00px 0;transform:scaleX(0.8008);-webkit-text-stroke:3.6px #fff;">N</div>
<div class="t" style="left:2376.30px;top:157.41px;font-size:47px;font-weight:bold;color:#ffffff;transform-origin:0.00px 0;transform:scaleX(0.8511);-webkit-text-stroke:3.6px #fff;">M</div>
<div class="t" style="left:2453.30px;top:157.41px;font-size:47px;font-weight:bold;color:#ffffff;transform-origin:0.00px 0;transform:scaleX(0.8983);-webkit-text-stroke:3.6px #fff;">D</div>
<div class="t" style="left:2488.10px;top:157.41px;font-size:47px;font-weight:bold;color:#ffffff;transform-origin:0.00px 0;transform:scaleX(0.5951);-webkit-text-stroke:3.6px #fff;">E</div>
<div class="t" style="left:2513.60px;top:157.41px;font-size:47px;font-weight:bold;color:#ffffff;transform-origin:0.00px 0;transform:scaleX(0.5685);-webkit-text-stroke:3.6px #fff;">L</div>
<div class="t" style="left:2534.30px;top:157.41px;font-size:47px;font-weight:bold;color:#ffffff;transform-origin:0.00px 0;transform:scaleX(0.8447);-webkit-text-stroke:3.6px #fff;">S</div>
<div class="t" style="left:2567.50px;top:157.41px;font-size:47px;font-weight:bold;color:#ffffff;transform-origin:0.00px 0;transform:scaleX(0.5999);-webkit-text-stroke:3.6px #fff;">L</div>
<div class="t" style="left:2587.60px;top:157.41px;font-size:47px;font-weight:bold;color:#ffffff;transform-origin:0.00px 0;transform:scaleX(0.9840);-webkit-text-stroke:3.6px #fff;">A</div>
<div class="t" style="left:2626.90px;top:157.41px;font-size:47px;font-weight:bold;color:#ffffff;transform-origin:0.00px 0;transform:scaleX(0.7329);-webkit-text-stroke:3.6px #fff;">B</div>
<svg class="s" style="left:2405.00px;top:148.00px;" width="54.00" height="56.00" viewBox="0 0 54.00 56.00"><circle cx="26.55" cy="32.45" r="13.6" fill="none" stroke="#fff" stroke-width="8.3"/><rect x="20.4" y="5.5" width="12.2" height="30" rx="6" fill="#292929"/><rect x="21.9" y="7" width="9.2" height="27" rx="4.6" fill="#fff"/></svg>
<div class="t" style="left:2295.00px;top:208.61px;font-size:34px;color:#ffffff;transform-origin:0.00px 0;transform:scaleX(1.0800);">T</div>
<div class="t" style="left:2338.20px;top:208.61px;font-size:34px;color:#ffffff;transform-origin:0.00px 0;transform:scaleX(1.0228);">e</div>
<div class="t" style="left:2382.20px;top:208.61px;font-size:34px;color:#ffffff;transform-origin:0.00px 0;transform:scaleX(1.0567);">m</div>
<div class="t" style="left:2438.50px;top:208.61px;font-size:34px;color:#ffffff;transform-origin:0.00px 0;transform:scaleX(1.0599);">p</div>
<div class="t" style="left:2483.20px;top:208.61px;font-size:34px;color:#ffffff;transform-origin:0.00px 0;transform:scaleX(0.6150);">l</div>
<div class="t" style="left:2511.70px;top:208.61px;font-size:34px;color:#ffffff;transform-origin:0.00px 0;transform:scaleX(0.9716);">a</div>
<div class="t" style="left:2554.10px;top:208.61px;font-size:34px;color:#ffffff;transform-origin:0.00px 0;transform:scaleX(1.2185);">t</div>
<div class="t" style="left:2589.60px;top:208.61px;font-size:34px;color:#ffffff;transform-origin:0.00px 0;transform:scaleX(1.1023);">e</div>
<div class="t" style="left:2634.30px;top:208.61px;font-size:34px;color:#ffffff;">s</div>
<svg class="s" style="left:2847.80px;top:251.50px;" width="19.00" height="12.00" viewBox="0 0 19.00 12.00"><polyline points="2,2 9.50,10.00 17.00,2" fill="none" stroke="#ffffff" stroke-width="1.6" stroke-linecap="round" stroke-linejoin="round"/></svg>
<div class="r" style="left:11.00px;top:278.00px;width:2849.00px;height:22.00px;background:#0b0b0b;"></div>
<svg class="s" style="left:28.00px;top:281.00px;" width="18.00" height="18.00" viewBox="0 0 18.00 18.00"><path d="M16 1.8 V15.7 H1.8 Z" fill="#6a6a6a"/></svg>
<div class="r" style="left:47.00px;top:278.00px;width:22.60px;height:22.00px;background:#5e5e5e;"></div>
<div class="r" style="left:47.00px;top:298.80px;width:22.60px;height:2.00px;background:#1f7a45;"></div>
<div class="t" style="left:52.44px;top:282.18px;font-size:17.5px;color:#ffffff;">A</div>
<div class="r" style="left:69.10px;top:279.00px;width:1.00px;height:21.00px;background:#8a8a8a;"></div>
<div class="t" style="left:89.63px;top:282.18px;font-size:17.5px;color:#dcdcdc;">B</div>
<div class="r" style="left:120.80px;top:279.00px;width:1.00px;height:21.00px;background:#3d3d3d;"></div>
<div class="t" style="left:140.85px;top:282.18px;font-size:17.5px;color:#dcdcdc;">C</div>
<div class="r" style="left:172.50px;top:279.00px;width:1.00px;height:21.00px;background:#3d3d3d;"></div>
<div class="t" style="left:192.85px;top:282.18px;font-size:17.5px;color:#dcdcdc;">D</div>
<div class="r" style="left:224.80px;top:279.00px;width:1.00px;height:21.00px;background:#3d3d3d;"></div>
<div class="t" style="left:245.33px;top:282.18px;font-size:17.5px;color:#dcdcdc;">E</div>
<div class="r" style="left:276.50px;top:279.00px;width:1.00px;height:21.00px;background:#3d3d3d;"></div>
<div class="t" style="left:304.31px;top:282.18px;font-size:17.5px;color:#dcdcdc;">F</div>
<div class="r" style="left:341.80px;top:279.00px;width:1.00px;height:21.00px;background:#3d3d3d;"></div>
<div class="t" style="left:361.48px;top:282.18px;font-size:17.5px;color:#dcdcdc;">G</div>
<div class="r" style="left:393.80px;top:279.00px;width:1.00px;height:21.00px;background:#3d3d3d;"></div>
<div class="t" style="left:421.35px;top:282.18px;font-size:17.5px;color:#dcdcdc;">H</div>
<div class="r" style="left:460.50px;top:279.00px;width:1.00px;height:21.00px;background:#3d3d3d;"></div>
<div class="t" style="left:511.05px;top:282.18px;font-size:17.5px;color:#dcdcdc;">I</div>
<div class="r" style="left:565.50px;top:279.00px;width:1.00px;height:21.00px;background:#3d3d3d;"></div>
<div class="t" style="left:623.33px;top:282.18px;font-size:17.5px;color:#dcdcdc;">J</div>
<div class="r" style="left:688.90px;top:279.00px;width:1.00px;height:21.00px;background:#3d3d3d;"></div>
<div class="t" style="left:745.08px;top:282.18px;font-size:17.5px;color:#dcdcdc;">K</div>
<div class="r" style="left:811.90px;top:279.00px;width:1.00px;height:21.00px;background:#3d3d3d;"></div>
<div class="t" style="left:869.04px;top:282.18px;font-size:17.5px;color:#dcdcdc;">L</div>
<div class="r" style="left:934.90px;top:279.00px;width:1.00px;height:21.00px;background:#3d3d3d;"></div>
<div class="t" style="left:989.59px;top:282.18px;font-size:17.5px;color:#dcdcdc;">M</div>
<div class="r" style="left:1057.90px;top:279.00px;width:1.00px;height:21.00px;background:#3d3d3d;"></div>
<div class="t" style="left:1113.60px;top:282.18px;font-size:17.5px;color:#dcdcdc;">N</div>
<div class="r" style="left:1180.90px;top:279.00px;width:1.00px;height:21.00px;background:#3d3d3d;"></div>
<div class="t" style="left:1236.08px;top:282.18px;font-size:17.5px;color:#dcdcdc;">O</div>
<div class="r" style="left:1303.90px;top:279.00px;width:1.00px;height:21.00px;background:#3d3d3d;"></div>
<div class="t" style="left:1311.13px;top:282.18px;font-size:17.5px;color:#dcdcdc;">P</div>
<div class="r" style="left:1329.00px;top:279.00px;width:1.00px;height:21.00px;background:#3d3d3d;"></div>
<div class="t" style="left:1365.17px;top:282.18px;font-size:17.5px;color:#dcdcdc;">Q</div>
<div class="r" style="left:1414.00px;top:279.00px;width:1.00px;height:21.00px;background:#3d3d3d;"></div>
<div class="t" style="left:1450.70px;top:282.18px;font-size:17.5px;color:#dcdcdc;">R</div>
<div class="r" style="left:1499.00px;top:279.00px;width:1.00px;height:21.00px;background:#3d3d3d;"></div>
<div class="t" style="left:1536.18px;top:282.18px;font-size:17.5px;color:#dcdcdc;">S</div>
<div class="r" style="left:1584.00px;top:279.00px;width:1.00px;height:21.00px;background:#3d3d3d;"></div>
<div class="t" style="left:1621.66px;top:282.18px;font-size:17.5px;color:#dcdcdc;">T</div>
<div class="r" style="left:1669.00px;top:279.00px;width:1.00px;height:21.00px;background:#3d3d3d;"></div>
<div class="t" style="left:1705.70px;top:282.18px;font-size:17.5px;color:#dcdcdc;">U</div>
<div class="r" style="left:1754.00px;top:279.00px;width:1.00px;height:21.00px;background:#3d3d3d;"></div>
<div class="t" style="left:1791.18px;top:282.18px;font-size:17.5px;color:#dcdcdc;">V</div>
<div class="r" style="left:1839.00px;top:279.00px;width:1.00px;height:21.00px;background:#3d3d3d;"></div>
<div class="t" style="left:1873.73px;top:282.18px;font-size:17.5px;color:#dcdcdc;">W</div>
<div class="r" style="left:1924.00px;top:279.00px;width:1.00px;height:21.00px;background:#3d3d3d;"></div>
<div class="t" style="left:1961.18px;top:282.18px;font-size:17.5px;color:#dcdcdc;">X</div>
<div class="r" style="left:2009.00px;top:279.00px;width:1.00px;height:21.00px;background:#3d3d3d;"></div>
<div class="t" style="left:2046.18px;top:282.18px;font-size:17.5px;color:#dcdcdc;">Y</div>
<div class="r" style="left:2094.00px;top:279.00px;width:1.00px;height:21.00px;background:#3d3d3d;"></div>
<div class="t" style="left:2131.66px;top:282.18px;font-size:17.5px;color:#dcdcdc;">Z</div>
<div class="r" style="left:2179.00px;top:279.00px;width:1.00px;height:21.00px;background:#3d3d3d;"></div>
<div class="t" style="left:2210.32px;top:282.18px;font-size:17.5px;color:#dcdcdc;">AA</div>
<div class="r" style="left:2264.00px;top:279.00px;width:1.00px;height:21.00px;background:#3d3d3d;"></div>
<div class="t" style="left:2295.32px;top:282.18px;font-size:17.5px;color:#dcdcdc;">AB</div>
<div class="r" style="left:2349.00px;top:279.00px;width:1.00px;height:21.00px;background:#3d3d3d;"></div>
<div class="t" style="left:2379.84px;top:282.18px;font-size:17.5px;color:#dcdcdc;">AC</div>
<div class="r" style="left:2434.00px;top:279.00px;width:1.00px;height:21.00px;background:#3d3d3d;"></div>
<div class="t" style="left:2464.84px;top:282.18px;font-size:17.5px;color:#dcdcdc;">AD</div>
<div class="r" style="left:2519.00px;top:279.00px;width:1.00px;height:21.00px;background:#3d3d3d;"></div>
<div class="t" style="left:2550.32px;top:282.18px;font-size:17.5px;color:#dcdcdc;">AE</div>
<div class="r" style="left:2604.00px;top:279.00px;width:1.00px;height:21.00px;background:#3d3d3d;"></div>
<div class="t" style="left:2635.80px;top:282.18px;font-size:17.5px;color:#dcdcdc;">AF</div>
<div class="r" style="left:2689.00px;top:279.00px;width:1.00px;height:21.00px;background:#3d3d3d;"></div>
<div class="t" style="left:2719.36px;top:282.18px;font-size:17.5px;color:#dcdcdc;">AG</div>
<div class="r" style="left:2774.00px;top:279.00px;width:1.00px;height:21.00px;background:#3d3d3d;"></div>
<div class="t" style="left:2804.84px;top:282.18px;font-size:17.5px;color:#dcdcdc;">AH</div>
<div class="r" style="left:69.10px;top:279.00px;width:1.00px;height:21.00px;background:#8a8a8a;"></div>
<div class="r" style="left:46.50px;top:279.00px;width:1.00px;height:21.00px;background:#8a8a8a;"></div>
<div class="r" style="left:11.00px;top:300.00px;width:36.00px;height:1370.00px;background:#0b0b0b;"></div>
<div class="r" style="left:11.00px;top:300.40px;width:35.20px;height:35.20px;background:#6b6b6b;"></div>
<div class="r" style="left:46.10px;top:300.40px;width:1.90px;height:35.20px;background:#1f7a45;"></div>
<div class="r" style="left:11.00px;top:335.10px;width:36.00px;height:1.00px;background:#a0a0a0;"></div>
<div class="t" style="left:24.34px;top:317.98px;font-size:17.5px;color:#ffffff;">1</div>
<div class="r" style="left:11.00px;top:367.00px;width:36.00px;height:1.00px;background:#3d3d3d;"></div>
<div class="t" style="left:24.34px;top:349.88px;font-size:17.5px;color:#dcdcdc;">2</div>
<div class="r" style="left:11.00px;top:398.90px;width:36.00px;height:1.00px;background:#3d3d3d;"></div>
<div class="t" style="left:24.34px;top:381.78px;font-size:17.5px;color:#dcdcdc;">3</div>
<div class="r" style="left:11.00px;top:421.80px;width:36.00px;height:1.00px;background:#3d3d3d;"></div>
<div class="t" style="left:24.34px;top:404.68px;font-size:17.5px;color:#dcdcdc;">4</div>
<div class="r" style="left:11.00px;top:452.90px;width:36.00px;height:1.00px;background:#3d3d3d;"></div>
<div class="t" style="left:24.34px;top:435.78px;font-size:17.5px;color:#dcdcdc;">5</div>
<div class="r" style="left:11.00px;top:484.80px;width:36.00px;height:1.00px;background:#3d3d3d;"></div>
<div class="t" style="left:24.34px;top:467.68px;font-size:17.5px;color:#dcdcdc;">7</div>
<div class="r" style="left:11.00px;top:505.80px;width:36.00px;height:1.00px;background:#3d3d3d;"></div>
<div class="t" style="left:24.34px;top:488.68px;font-size:17.5px;color:#dcdcdc;">8</div>
<div class="r" style="left:11.00px;top:539.00px;width:36.00px;height:1.00px;background:#3d3d3d;"></div>
<div class="t" style="left:24.34px;top:521.88px;font-size:17.5px;color:#dcdcdc;">9</div>
<div class="r" style="left:11.00px;top:572.10px;width:36.00px;height:1.00px;background:#3d3d3d;"></div>
<div class="t" style="left:19.49px;top:554.98px;font-size:17.5px;color:#dcdcdc;">10</div>
<div class="r" style="left:11.00px;top:605.00px;width:36.00px;height:1.00px;background:#3d3d3d;"></div>
<div class="t" style="left:20.10px;top:587.88px;font-size:17.5px;color:#dcdcdc;">11</div>
<div class="r" style="left:11.00px;top:638.10px;width:36.00px;height:1.00px;background:#3d3d3d;"></div>
<div class="t" style="left:19.49px;top:620.98px;font-size:17.5px;color:#dcdcdc;">12</div>
<div class="r" style="left:11.00px;top:671.00px;width:36.00px;height:1.00px;background:#3d3d3d;"></div>
<div class="t" style="left:19.49px;top:653.88px;font-size:17.5px;color:#dcdcdc;">13</div>
<div class="r" style="left:11.00px;top:704.10px;width:36.00px;height:1.00px;background:#3d3d3d;"></div>
<div class="t" style="left:19.49px;top:686.98px;font-size:17.5px;color:#dcdcdc;">14</div>
<div class="r" style="left:11.00px;top:737.00px;width:36.00px;height:1.00px;background:#3d3d3d;"></div>
<div class="t" style="left:19.49px;top:719.88px;font-size:17.5px;color:#dcdcdc;">15</div>
<div class="r" style="left:11.00px;top:769.90px;width:36.00px;height:1.00px;background:#3d3d3d;"></div>
<div class="t" style="left:19.49px;top:752.78px;font-size:17.5px;color:#dcdcdc;">16</div>
<div class="r" style="left:11.00px;top:802.60px;width:36.00px;height:1.00px;background:#3d3d3d;"></div>
<div class="t" style="left:19.49px;top:785.48px;font-size:17.5px;color:#dcdcdc;">17</div>
<div class="r" style="left:11.00px;top:835.90px;width:36.00px;height:1.00px;background:#3d3d3d;"></div>
<div class="t" style="left:19.49px;top:818.78px;font-size:17.5px;color:#dcdcdc;">18</div>
<div class="r" style="left:11.00px;top:869.10px;width:36.00px;height:1.00px;background:#3d3d3d;"></div>
<div class="t" style="left:19.49px;top:851.98px;font-size:17.5px;color:#dcdcdc;">19</div>
<div class="r" style="left:11.00px;top:902.10px;width:36.00px;height:1.00px;background:#3d3d3d;"></div>
<div class="t" style="left:19.49px;top:884.98px;font-size:17.5px;color:#dcdcdc;">20</div>
<div class="r" style="left:11.00px;top:935.30px;width:36.00px;height:1.00px;background:#3d3d3d;"></div>
<div class="t" style="left:19.49px;top:918.18px;font-size:17.5px;color:#dcdcdc;">21</div>
<div class="r" style="left:11.00px;top:968.10px;width:36.00px;height:1.00px;background:#3d3d3d;"></div>
<div class="t" style="left:19.49px;top:950.98px;font-size:17.5px;color:#dcdcdc;">22</div>
<div class="r" style="left:11.00px;top:1001.30px;width:36.00px;height:1.00px;background:#3d3d3d;"></div>
<div class="t" style="left:19.49px;top:984.18px;font-size:17.5px;color:#dcdcdc;">23</div>
<div class="r" style="left:11.00px;top:1034.10px;width:36.00px;height:1.00px;background:#3d3d3d;"></div>
<div class="t" style="left:19.49px;top:1016.98px;font-size:17.5px;color:#dcdcdc;">24</div>
<div class="r" style="left:11.00px;top:1064.00px;width:36.00px;height:1.00px;background:#3d3d3d;"></div>
<div class="t" style="left:19.49px;top:1046.88px;font-size:17.5px;color:#dcdcdc;">25</div>
<div class="r" style="left:11.00px;top:1097.00px;width:36.00px;height:1.00px;background:#3d3d3d;"></div>
<div class="t" style="left:19.49px;top:1079.88px;font-size:17.5px;color:#dcdcdc;">26</div>
<div class="r" style="left:11.00px;top:1134.20px;width:36.00px;height:1.00px;background:#3d3d3d;"></div>
<div class="t" style="left:19.49px;top:1117.08px;font-size:17.5px;color:#dcdcdc;">29</div>
<div class="r" style="left:11.00px;top:1166.10px;width:36.00px;height:1.00px;background:#3d3d3d;"></div>
<div class="t" style="left:19.49px;top:1148.98px;font-size:17.5px;color:#dcdcdc;">31</div>
<div class="r" style="left:11.00px;top:1194.30px;width:36.00px;height:1.00px;background:#3d3d3d;"></div>
<div class="t" style="left:19.49px;top:1177.18px;font-size:17.5px;color:#dcdcdc;">32</div>
<div class="r" style="left:11.00px;top:1213.80px;width:36.00px;height:1.00px;background:#3d3d3d;"></div>
<div class="t" style="left:19.49px;top:1196.68px;font-size:17.5px;color:#dcdcdc;">33</div>
<div class="r" style="left:11.00px;top:1235.80px;width:36.00px;height:1.00px;background:#3d3d3d;"></div>
<div class="t" style="left:19.49px;top:1218.68px;font-size:17.5px;color:#dcdcdc;">34</div>
<div class="r" style="left:11.00px;top:1258.00px;width:36.00px;height:1.00px;background:#3d3d3d;"></div>
<div class="t" style="left:19.49px;top:1240.88px;font-size:17.5px;color:#dcdcdc;">35</div>
<div class="r" style="left:11.00px;top:1286.00px;width:36.00px;height:1.00px;background:#3d3d3d;"></div>
<div class="t" style="left:19.49px;top:1268.88px;font-size:17.5px;color:#dcdcdc;">36</div>
<div class="r" style="left:11.00px;top:1314.00px;width:36.00px;height:1.00px;background:#3d3d3d;"></div>
<div class="t" style="left:19.49px;top:1296.88px;font-size:17.5px;color:#dcdcdc;">37</div>
<div class="r" style="left:11.00px;top:1336.20px;width:36.00px;height:1.00px;background:#3d3d3d;"></div>
<div class="t" style="left:19.49px;top:1319.08px;font-size:17.5px;color:#dcdcdc;">38</div>
<div class="r" style="left:11.00px;top:1364.10px;width:36.00px;height:1.00px;background:#3d3d3d;"></div>
<div class="t" style="left:19.49px;top:1346.98px;font-size:17.5px;color:#dcdcdc;">39</div>
<div class="r" style="left:11.00px;top:1392.00px;width:36.00px;height:1.00px;background:#3d3d3d;"></div>
<div class="t" style="left:19.49px;top:1374.88px;font-size:17.5px;color:#dcdcdc;">40</div>
<div class="r" style="left:11.00px;top:1413.80px;width:36.00px;height:1.00px;background:#3d3d3d;"></div>
<div class="t" style="left:19.49px;top:1396.68px;font-size:17.5px;color:#dcdcdc;">41</div>
<div class="r" style="left:11.00px;top:1435.90px;width:36.00px;height:1.00px;background:#3d3d3d;"></div>
<div class="t" style="left:19.49px;top:1418.78px;font-size:17.5px;color:#dcdcdc;">42</div>
<div class="r" style="left:11.00px;top:1460.80px;width:36.00px;height:1.00px;background:#3d3d3d;"></div>
<div class="t" style="left:19.49px;top:1443.68px;font-size:17.5px;color:#dcdcdc;">43</div>
<div class="r" style="left:11.00px;top:1488.80px;width:36.00px;height:1.00px;background:#3d3d3d;"></div>
<div class="t" style="left:19.49px;top:1471.68px;font-size:17.5px;color:#dcdcdc;">44</div>
<div class="r" style="left:11.00px;top:1510.90px;width:36.00px;height:1.00px;background:#3d3d3d;"></div>
<div class="t" style="left:19.49px;top:1493.78px;font-size:17.5px;color:#dcdcdc;">45</div>
<div class="r" style="left:11.00px;top:1533.10px;width:36.00px;height:1.00px;background:#3d3d3d;"></div>
<div class="t" style="left:19.49px;top:1515.98px;font-size:17.5px;color:#dcdcdc;">46</div>
<div class="r" style="left:11.00px;top:1561.20px;width:36.00px;height:1.00px;background:#3d3d3d;"></div>
<div class="t" style="left:19.49px;top:1544.08px;font-size:17.5px;color:#dcdcdc;">47</div>
<div class="r" style="left:11.00px;top:1589.10px;width:36.00px;height:1.00px;background:#3d3d3d;"></div>
<div class="t" style="left:19.49px;top:1571.98px;font-size:17.5px;color:#dcdcdc;">48</div>
<div class="r" style="left:11.00px;top:1610.80px;width:36.00px;height:1.00px;background:#3d3d3d;"></div>
<div class="t" style="left:19.49px;top:1593.68px;font-size:17.5px;color:#dcdcdc;">49</div>
<div class="r" style="left:11.00px;top:1638.50px;width:36.00px;height:1.00px;background:#3d3d3d;"></div>
<div class="t" style="left:19.49px;top:1621.38px;font-size:17.5px;color:#dcdcdc;">50</div>
<div class="r" style="left:11.00px;top:1666.50px;width:36.00px;height:1.00px;background:#3d3d3d;"></div>
<div class="t" style="left:19.49px;top:1649.38px;font-size:17.5px;color:#dcdcdc;">51</div>
<div class="r" style="left:11.00px;top:299.90px;width:36.00px;height:1.00px;background:#a0a0a0;"></div>
<div class="r" style="left:11.00px;top:452.90px;width:36.00px;height:1.00px;background:#5a5a5a;"></div>
<div class="r" style="left:11.00px;top:456.60px;width:36.00px;height:1.00px;background:#5a5a5a;"></div>
<div class="r" style="left:11.00px;top:1097.00px;width:36.00px;height:1.00px;background:#5a5a5a;"></div>
<div class="r" style="left:11.00px;top:1102.80px;width:36.00px;height:1.00px;background:#5a5a5a;"></div>
<div class="r" style="left:11.00px;top:1134.20px;width:36.00px;height:1.00px;background:#5a5a5a;"></div>
<div class="r" style="left:11.00px;top:1138.10px;width:36.00px;height:1.00px;background:#5a5a5a;"></div>
<div class="r" style="left:47.50px;top:300.40px;width:2812.50px;height:1369.60px;background:#ffffff;"></div>
<div class="r" style="left:46.60px;top:300.40px;width:1.80px;height:35.20px;background:#1f7a45;"></div>
<div class="r" style="left:11.00px;top:421.80px;width:2849.00px;height:1.00px;background:#9a9a9a;"></div>
<div class="r" style="left:2860.00px;top:278.00px;width:31.00px;height:1392.00px;background:#141414;"></div>
<div class="r" style="left:2863.00px;top:279.00px;width:25.00px;height:24.00px;background:#1a1a1a;border-radius:12px;"></div>
<div class="r" style="left:2863.00px;top:1645.00px;width:25.00px;height:24.00px;background:#1a1a1a;border-radius:12px;"></div>
<svg class="s" style="left:2868.00px;top:285.00px;" width="16.00" height="12.00" viewBox="0 0 16.00 12.00"><path d="M8 1.5 L14.5 10.5 H1.5 Z" fill="#9a9a9a" stroke="#9a9a9a" stroke-width="1.5" stroke-linejoin="round"/></svg>
<div class="r" style="left:2870.30px;top:304.00px;width:11.70px;height:1111.70px;background:#9a9a9a;border-radius:6px;"></div>
<svg class="s" style="left:2868.00px;top:1652.00px;" width="16.00" height="12.00" viewBox="0 0 16.00 12.00"><path d="M8 10.5 L14.5 1.5 H1.5 Z" fill="#9a9a9a" stroke="#9a9a9a" stroke-width="1.5" stroke-linejoin="round"/></svg>
<div class="r" style="left:11.00px;top:1670.00px;width:2880.00px;height:48.00px;background:#0b0b0b;"></div>
<svg class="s" style="left:44.00px;top:1682.00px;" width="14.00" height="20.00" viewBox="0 0 14.00 20.00"><polyline points="10,2 3,10 10,18" fill="none" stroke="#9a9a9a" stroke-width="1.6"/></svg>
<svg class="s" style="left:92.00px;top:1682.00px;" width="14.00" height="20.00" viewBox="0 0 14.00 20.00"><polyline points="4,2 11,10 4,18" fill="none" stroke="#9a9a9a" stroke-width="1.6"/></svg>
<div class="t" style="left:190.00px;top:1686.23px;font-size:20.4px;color:#ffffff;">Contents</div>
<div class="r" style="left:299.00px;top:1676.00px;width:127.70px;height:35.80px;background:#fde96f;border-radius:6px;"></div>
<div class="t" style="left:313.40px;top:1686.23px;font-size:20.4px;color:#101010;">Dashboard</div>
<div class="r" style="left:439.80px;top:1676.00px;width:105.90px;height:35.80px;background:#fde96f;border-radius:6px;"></div>
<div class="t" style="left:454.50px;top:1686.23px;font-size:20.4px;color:#101010;transform-origin:0.00px 0;transform:scaleX(0.9571);">Revenue</div>
<div class="r" style="left:558.80px;top:1676.00px;width:158.20px;height:35.80px;background:#fde96f;border-radius:6px;"></div>
<div class="t" style="left:572.50px;top:1686.23px;font-size:20.4px;color:#101010;transform-origin:0.00px 0;transform:scaleX(0.9246);">COGS &amp; OPEX</div>
<div class="r" style="left:730.00px;top:1676.00px;width:88.60px;height:35.80px;background:#fde96f;border-radius:6px;"></div>
<div class="t" style="left:743.90px;top:1686.23px;font-size:20.4px;color:#101010;transform-origin:0.00px 0;transform:scaleX(0.9804);">Payroll</div>
<div class="r" style="left:832.00px;top:1676.00px;width:86.60px;height:35.80px;background:#fde96f;border-radius:6px;"></div>
<div class="t" style="left:844.80px;top:1686.23px;font-size:20.4px;color:#101010;transform-origin:0.00px 0;transform:scaleX(0.8835);">CAPEX</div>
<div class="r" style="left:932.00px;top:1676.00px;width:112.80px;height:35.80px;background:#fde96f;border-radius:6px;"></div>
<div class="t" style="left:945.00px;top:1686.23px;font-size:20.4px;color:#101010;">CapTable</div>
<div class="r" style="left:1058.00px;top:1676.00px;width:89.60px;height:35.80px;background:#fde96f;border-radius:6px;"></div>
<div class="t" style="left:1071.20px;top:1686.23px;font-size:20.4px;color:#101010;">Capital</div>
<div class="r" style="left:1161.00px;top:1676.00px;width:41.70px;height:35.80px;background:#4db3e8;border-radius:6px;"></div>
<div class="t" style="left:1174.90px;top:1686.23px;font-size:20.4px;color:#101010;transform-origin:0.00px 0;transform:scaleX(0.7833);">IS</div>
<div class="r" style="left:1216.00px;top:1676.00px;width:47.80px;height:35.80px;background:#4db3e8;border-radius:6px;"></div>
<div class="t" style="left:1228.30px;top:1686.23px;font-size:20.4px;color:#101010;transform-origin:0.00px 0;transform:scaleX(0.8555);">CF</div>
<div class="r" style="left:1277.00px;top:1676.00px;width:47.90px;height:35.80px;background:#4db3e8;border-radius:6px;"></div>
<div class="t" style="left:1288.00px;top:1686.23px;font-size:20.4px;color:#101010;transform-origin:0.00px 0;transform:scaleX(0.8813);">BS</div>
<div class="r" style="left:1338.00px;top:1676.00px;width:114.70px;height:35.80px;background:#4db3e8;border-radius:6px;"></div>
<div class="t" style="left:1351.10px;top:1686.23px;font-size:20.4px;color:#101010;transform-origin:0.00px 0;transform:scaleX(0.9594);">Scenarios</div>
<div class="r" style="left:1466.40px;top:1676.00px;width:114.20px;height:35.80px;background:#4db3e8;border-radius:6px;"></div>
<div class="t" style="left:1479.40px;top:1686.23px;font-size:20.4px;color:#101010;transform-origin:0.00px 0;transform:scaleX(1.0367);">Valuation</div>
<div class="r" style="left:1594.00px;top:1676.00px;width:113.60px;height:35.80px;background:#4db3e8;border-radius:6px;"></div>
<div class="t" style="left:1608.60px;top:1686.23px;font-size:20.4px;color:#101010;transform-origin:0.00px 0;transform:scaleX(0.9930);">Summary</div>
<div class="r" style="left:1782.00px;top:1676.00px;width:71.70px;height:35.80px;background:#4db3e8;border-radius:6px;"></div>
<div class="t" style="left:1795.90px;top:1686.23px;font-size:20.4px;color:#101010;transform-origin:0.00px 0;transform:scaleX(0.8922);">ROIC</div>
<div class="r" style="left:1867.00px;top:1676.00px;width:84.40px;height:35.80px;background:#4db3e8;border-radius:6px;"></div>
<div class="t" style="left:1880.30px;top:1686.23px;font-size:20.4px;color:#101010;transform-origin:0.00px 0;transform:scaleX(0.9571);">Charts</div>
<div class="r" style="left:1965.00px;top:1676.00px;width:63.00px;height:35.80px;background:#4db3e8;border-radius:6px;"></div>
<div class="t" style="left:1978.70px;top:1686.23px;font-size:20.4px;color:#101010;transform-origin:0.00px 0;transform:scaleX(0.8596);">KPIs</div>
<div class="r" style="left:2042.00px;top:1676.00px;width:30.00px;height:35.80px;background:#4db3e8;border-radius:6px 0 0 6px;"></div>
<div class="r" style="left:2042px;top:1676px;width:30px;height:36px;overflow:hidden"><div class="t" style="left:14.00px;top:10.23px;font-size:20.4px;color:#101010;">Scenarios</div>
</div>
<div class="r" style="left:291.50px;top:1683.00px;width:1.00px;height:22.00px;background:#4a4a4a;"></div>
<div class="r" style="left:432.75px;top:1683.00px;width:1.00px;height:22.00px;background:#4a4a4a;"></div>
<div class="r" style="left:551.75px;top:1683.00px;width:1.00px;height:22.00px;background:#4a4a4a;"></div>
<div class="r" style="left:723.00px;top:1683.00px;width:1.00px;height:22.00px;background:#4a4a4a;"></div>
<div class="r" style="left:824.80px;top:1683.00px;width:1.00px;height:22.00px;background:#4a4a4a;"></div>
<div class="r" style="left:924.80px;top:1683.00px;width:1.00px;height:22.00px;background:#4a4a4a;"></div>
<div class="r" style="left:1050.90px;top:1683.00px;width:1.00px;height:22.00px;background:#4a4a4a;"></div>
<div class="r" style="left:1153.80px;top:1683.00px;width:1.00px;height:22.00px;background:#4a4a4a;"></div>
<div class="r" style="left:1208.85px;top:1683.00px;width:1.00px;height:22.00px;background:#4a4a4a;"></div>
<div class="r" style="left:1269.90px;top:1683.00px;width:1.00px;height:22.00px;background:#4a4a4a;"></div>
<div class="r" style="left:1330.95px;top:1683.00px;width:1.00px;height:22.00px;background:#4a4a4a;"></div>
<div class="r" style="left:1459.05px;top:1683.00px;width:1.00px;height:22.00px;background:#4a4a4a;"></div>
<div class="r" style="left:1586.80px;top:1683.00px;width:1.00px;height:22.00px;background:#4a4a4a;"></div>
<div class="r" style="left:1713.80px;top:1683.00px;width:1.00px;height:22.00px;background:#4a4a4a;"></div>
<div class="r" style="left:1775.00px;top:1683.00px;width:1.00px;height:22.00px;background:#4a4a4a;"></div>
<div class="r" style="left:1859.85px;top:1683.00px;width:1.00px;height:22.00px;background:#4a4a4a;"></div>
<div class="r" style="left:1957.70px;top:1683.00px;width:1.00px;height:22.00px;background:#4a4a4a;"></div>
<div class="r" style="left:1712.00px;top:1669.00px;width:66.00px;height:17.00px;background:#ffffff;"></div>
<div class="r" style="left:1708.00px;top:1669.70px;width:13.50px;height:20.30px;background:#0b0b0b;border-top-right-radius:7px;"></div>
<div class="r" style="left:1768.50px;top:1669.70px;width:13.00px;height:20.30px;background:#0b0b0b;border-top-left-radius:7px;"></div>
<div class="r" style="left:1713.80px;top:1683.00px;width:1.00px;height:22.00px;background:#4a4a4a;"></div>
<div class="r" style="left:1775.00px;top:1683.00px;width:1.00px;height:22.00px;background:#4a4a4a;"></div>
<div class="r" style="left:1721px;top:1669px;width:48px;height:43px;border-radius:0 0 7px 7px;background:linear-gradient(#ffffff 15%,#d6e9f7);box-shadow:0 0 0 1px #ffffff"></div>
<div class="t" style="left:1734.30px;top:1680.63px;font-size:20.4px;font-weight:bold;color:#101010;transform-origin:0.00px 0;transform:scaleX(0.7723);">BE</div>
<div class="r" style="left:1733.00px;top:1705.00px;width:23.60px;height:3.00px;background:#1f7a45;"></div>
<svg class="s" style="left:2084.00px;top:1687.00px;" width="22.00" height="10.00" viewBox="0 0 22.00 10.00"><circle cx="4" cy="5" r="2.2" fill="#fff"/><circle cx="11" cy="5" r="2.2" fill="#fff"/><circle cx="18" cy="5" r="2.2" fill="#fff"/></svg>
<svg class="s" style="left:2132.00px;top:1682.00px;" width="22.00" height="22.00" viewBox="0 0 22.00 22.00"><path d="M11 2 V20 M2 11 H20" stroke="#fff" stroke-width="1.7"/></svg>
<svg class="s" style="left:2188.00px;top:1683.00px;" width="8.00" height="22.00" viewBox="0 0 8.00 22.00"><circle cx="4" cy="4" r="2" fill="#fff"/><circle cx="4" cy="11" r="2" fill="#fff"/><circle cx="4" cy="18" r="2" fill="#fff"/></svg>
<div class="r" style="left:2216.00px;top:1681.00px;width:643.00px;height:24.00px;background:#141414;border-radius:12px;"></div>
<div class="r" style="left:2217.00px;top:1681.00px;width:24.00px;height:24.00px;background:#1a1a1a;border-radius:12px;"></div>
<div class="r" style="left:2835.00px;top:1681.00px;width:24.00px;height:24.00px;background:#1a1a1a;border-radius:12px;"></div>
<svg class="s" style="left:2222.00px;top:1686.00px;" width="14.00" height="16.00" viewBox="0 0 14.00 16.00"><path d="M1.5 7.5 L11 1.5 V13.5 Z" fill="#9a9a9a" stroke="#9a9a9a" stroke-width="1.5" stroke-linejoin="round"/></svg>
<div class="r" style="left:2242.00px;top:1687.00px;width:591.00px;height:12.00px;background:#9a9a9a;border-radius:6px;"></div>
<svg class="s" style="left:2840.00px;top:1686.00px;" width="14.00" height="16.00" viewBox="0 0 14.00 16.00"><path d="M12.5 7.5 L3 1.5 V13.5 Z" fill="#9a9a9a" stroke="#9a9a9a" stroke-width="1.5" stroke-linejoin="round"/></svg>
<div class="r" style="left:11.00px;top:1718.00px;width:2880.00px;height:32.60px;background:#141414;"></div>
<div class="r" style="left:11.00px;top:1717.50px;width:2880.00px;height:1.00px;background:#2e2e2e;"></div>
<div class="t" style="left:27.00px;top:1727.53px;font-size:16.5px;color:#e6e6e6;transform-origin:0.00px 0;transform:scaleX(0.8808);">Ready</div>
<svg class="s" style="left:98.00px;top:1724.00px;" width="26.00" height="24.00" viewBox="0 0 26.00 24.00"><rect x="2" y="3" width="19" height="15" fill="none" stroke="#e6e6e6" stroke-width="1.5"/><path d="M2 7 H21 M5 10.5 H9 M5 14 H9" stroke="#e6e6e6" stroke-width="1.4"/><circle cx="16" cy="15" r="5" fill="#141414" stroke="#e6e6e6" stroke-width="1.5"/></svg>
<svg class="s" style="left:145.00px;top:1722.00px;" width="26.00" height="27.00" viewBox="0 0 26.00 27.00"><circle cx="11" cy="4" r="2.3" fill="none" stroke="#e6e6e6" stroke-width="1.4"/><path d="M2 8 Q11 11 20 8 M11 10 V16 L6 25 M11 16 L14 21" fill="none" stroke="#e6e6e6" stroke-width="1.5"/><path d="M16 18 L24 26 M24 18 L16 26" stroke="#e6e6e6" stroke-width="1.5"/></svg>
<div class="t" style="left:173.30px;top:1727.53px;font-size:16.5px;font-weight:bold;color:#f0f0f0;transform-origin:0.00px 0;transform:scaleX(0.9509);">Accessibility: Investigate</div>
<div class="r" style="left:2445.00px;top:1719.00px;width:59.70px;height:31.60px;background:#262626;"></div>
<svg class="s" style="left:2463.00px;top:1724.00px;" width="22.00" height="22.00" viewBox="0 0 22.00 22.00"><rect x="1.5" y="1.5" width="19" height="19" fill="none" stroke="#e6e6e6" stroke-width="1.6"/><path d="M7.8 1.5 V20.5 M14.2 1.5 V20.5 M1.5 7.8 H20.5 M1.5 14.2 H20.5" stroke="#e6e6e6" stroke-width="1.6"/></svg>
<svg class="s" style="left:2523.00px;top:1724.00px;" width="22.00" height="22.00" viewBox="0 0 22.00 22.00"><rect x="1.5" y="1.5" width="19" height="19" fill="none" stroke="#e6e6e6" stroke-width="1.6"/><rect x="5.5" y="5" width="11" height="12" fill="none" stroke="#e6e6e6" stroke-width="1.4"/><path d="M8 8.5 H14 M8 11 H14 M8 13.5 H14" stroke="#e6e6e6" stroke-width="1.1"/></svg>
<svg class="s" style="left:2584.00px;top:1724.00px;" width="22.00" height="22.00" viewBox="0 0 22.00 22.00"><rect x="1.5" y="1.5" width="19" height="19" fill="none" stroke="#e6e6e6" stroke-width="1.6"/><path d="M1.5 11 H9 V1.5 M13 1.5 V11 H20.5" fill="none" stroke="#e6e6e6" stroke-width="1.6"/></svg>
<div class="r" style="left:2633.00px;top:1733.50px;width:11.00px;height:1.50px;background:#e6e6e6;"></div>
<div class="r" style="left:2653.00px;top:1734.00px;width:147.00px;height:1.00px;background:#bdbdbd;"></div>
<div class="r" style="left:2726.50px;top:1726.00px;width:6.50px;height:17.00px;background:#bdbdbd;"></div>
<svg class="s" style="left:2806.00px;top:1727.00px;" width="16.00" height="16.00" viewBox="0 0 16.00 16.00"><path d="M8 1.5 V14.5 M1.5 8 H14.5" stroke="#e6e6e6" stroke-width="1.5"/></svg>
<div class="t" style="left:2840.00px;top:1727.95px;font-size:16px;color:#f0f0f0;transform-origin:0.00px 0;transform:scaleX(0.9557);">110%</div>
<div class="t" style="left:75.90px;top:302.61px;font-size:32px;font-weight:bold;color:#262626;">Breakeven Analysis</div>
<div class="t" style="left:75.50px;top:340.21px;font-size:25.5px;font-weight:bold;color:#000000;transform-origin:0.00px 0;transform:scaleX(1.0479);">ABC Company Inc.</div>
<div class="t" style="left:73.40px;top:373.95px;font-size:18.6px;font-weight:bold;color:#3a7be0;">Go to Table of Contents</div>
<div class="r" style="left:73.40px;top:391.20px;width:209.60px;height:1.60px;background:#3a7be0;"></div>
<div class="r" style="left:69.90px;top:422.90px;width:497.00px;height:29.80px;background:#4b4fd2;"></div>
<div class="t" style="left:227.00px;top:426.06px;font-size:24.5px;font-weight:bold;color:#fff;transform-origin:0.00px 0;transform:scaleX(1.0156);">Breakeven date</div>
<div class="r" style="left:69.60px;top:457.30px;width:497.30px;height:28.30px;background:#4bb2e6;"></div>
<div class="t" style="left:281.00px;top:459.95px;font-size:22.5px;font-weight:bold;color:#fff;transform-origin:0.00px 0;transform:scaleX(1.0501);">Jan-26</div>
<div class="r" style="left:812.90px;top:422.90px;width:492.00px;height:29.80px;background:#4b4fd2;"></div>
<div class="t" style="left:933.40px;top:426.06px;font-size:24.5px;font-weight:bold;color:#fff;transform-origin:0.00px 0;transform:scaleX(1.0196);">Months to breakeven</div>
<div class="r" style="left:812.90px;top:457.30px;width:492.00px;height:28.30px;background:#4bb2e6;"></div>
<div class="t" style="left:1048.50px;top:459.95px;font-size:22.5px;font-weight:bold;color:#fff;transform-origin:0.00px 0;transform:scaleX(0.9209);">1</div>
<div class="r" style="left:69.20px;top:506.20px;width:1235.50px;height:33.40px;background:#4b4fd2;"></div>
<div class="t" style="left:522.20px;top:509.72px;font-size:27.5px;font-weight:bold;color:#fff;transform-origin:0.00px 0;transform:scaleX(1.0325);">Breakeven Chart ($'000)</div>
<div class="r" style="left:314.00px;top:565.80px;width:12.00px;height:12.00px;background:#4db3e6;"></div>
<div class="t" style="left:332.00px;top:560.95px;font-size:22.5px;font-weight:bold;color:#000;transform-origin:0.00px 0;transform:scaleX(1.0125);">Revenue</div>
<div class="r" style="left:650.00px;top:566.00px;width:11.50px;height:12.00px;background:#ffc000;"></div>
<div class="t" style="left:667.30px;top:560.95px;font-size:22.5px;font-weight:bold;color:#000;transform-origin:0.00px 0;transform:scaleX(1.0352);">Revenue Breakeven level (Annual)</div>
<div class="r" style="left:89.50px;top:603.00px;width:1185.60px;height:1.00px;background:#86b6d3;"></div>
<div class="r" style="left:89.50px;top:666.00px;width:1185.60px;height:1.00px;background:#86b6d3;"></div>
<div class="r" style="left:89.50px;top:728.00px;width:1185.60px;height:1.00px;background:#86b6d3;"></div>
<div class="r" style="left:89.50px;top:790.00px;width:1185.60px;height:1.00px;background:#86b6d3;"></div>
<div class="r" style="left:89.50px;top:853.00px;width:1185.60px;height:1.00px;background:#86b6d3;"></div>
<div class="r" style="left:89.50px;top:915.00px;width:1185.60px;height:1.00px;background:#86b6d3;"></div>
<div class="r" style="left:89.50px;top:977.00px;width:1185.60px;height:1.20px;background:#7fb0cf;"></div>
<div class="r" style="left:89.00px;top:977.40px;width:1.00px;height:5.50px;background:#7fb0cf;"></div>
<div class="r" style="left:326.12px;top:977.40px;width:1.00px;height:5.50px;background:#7fb0cf;"></div>
<div class="r" style="left:563.24px;top:977.40px;width:1.00px;height:5.50px;background:#7fb0cf;"></div>
<div class="r" style="left:800.36px;top:977.40px;width:1.00px;height:5.50px;background:#7fb0cf;"></div>
<div class="r" style="left:1037.48px;top:977.40px;width:1.00px;height:5.50px;background:#7fb0cf;"></div>
<div class="r" style="left:1274.60px;top:977.40px;width:1.00px;height:5.50px;background:#7fb0cf;"></div>
<div class="r" style="left:116.20px;top:962.62px;width:91.40px;height:14.78px;background:#4db3e6;"></div>
<div class="r" style="left:207.60px;top:969.74px;width:91.40px;height:7.06px;background:#ffc000;"></div>
<div class="t" style="left:184.01px;top:1024.84px;font-size:21.8px;font-weight:bold;color:#000;">2026</div>
<div class="r" style="left:353.32px;top:927.89px;width:91.40px;height:49.51px;background:#4db3e6;"></div>
<div class="r" style="left:444.72px;top:968.71px;width:91.40px;height:8.09px;background:#ffc000;"></div>
<div class="t" style="left:421.13px;top:1024.84px;font-size:21.8px;font-weight:bold;color:#000;">2027</div>
<div class="r" style="left:590.44px;top:861.27px;width:91.40px;height:116.13px;background:#4db3e6;"></div>
<div class="r" style="left:681.84px;top:965.89px;width:91.40px;height:10.91px;background:#ffc000;"></div>
<div class="t" style="left:658.25px;top:1024.84px;font-size:21.8px;font-weight:bold;color:#000;">2028</div>
<div class="r" style="left:827.56px;top:762.59px;width:91.40px;height:214.81px;background:#4db3e6;"></div>
<div class="r" style="left:918.96px;top:963.27px;width:91.40px;height:13.53px;background:#ffc000;"></div>
<div class="t" style="left:895.37px;top:1024.84px;font-size:21.8px;font-weight:bold;color:#000;">2029</div>
<div class="r" style="left:1064.68px;top:641.26px;width:91.40px;height:336.14px;background:#4db3e6;"></div>
<div class="r" style="left:1156.08px;top:960.62px;width:91.40px;height:16.18px;background:#ffc000;"></div>
<div class="t" style="left:1132.49px;top:1024.84px;font-size:21.8px;font-weight:bold;color:#000;">2030</div>
<div class="r" style="left:132.23px;top:932.62px;width:64.55px;height:22.00px;background:#ffffff;"></div>
<div class="t" style="left:141.20px;top:933.87px;font-size:18.6px;font-weight:bold;color:#000;">1,185</div>
<div class="r" style="left:231.38px;top:939.74px;width:49.03px;height:22.00px;background:#ffffff;"></div>
<div class="t" style="left:240.37px;top:940.99px;font-size:18.6px;font-weight:bold;color:#000;">614</div>
<div class="r" style="left:369.35px;top:897.89px;width:64.55px;height:22.00px;background:#ffffff;"></div>
<div class="t" style="left:378.32px;top:899.15px;font-size:18.6px;font-weight:bold;color:#000;">3,970</div>
<div class="r" style="left:468.50px;top:938.71px;width:49.03px;height:22.00px;background:#ffffff;"></div>
<div class="t" style="left:477.49px;top:939.96px;font-size:18.6px;font-weight:bold;color:#000;">697</div>
<div class="r" style="left:606.47px;top:831.27px;width:64.55px;height:22.00px;background:#ffffff;"></div>
<div class="t" style="left:615.44px;top:832.52px;font-size:18.6px;font-weight:bold;color:#000;">9,313</div>
<div class="r" style="left:705.62px;top:935.89px;width:49.03px;height:22.00px;background:#ffffff;"></div>
<div class="t" style="left:714.61px;top:937.14px;font-size:18.6px;font-weight:bold;color:#000;">923</div>
<div class="r" style="left:838.41px;top:732.59px;width:74.89px;height:22.00px;background:#ffffff;"></div>
<div class="t" style="left:847.40px;top:733.84px;font-size:18.6px;font-weight:bold;color:#000;">17,226</div>
<div class="r" style="left:934.99px;top:933.27px;width:64.55px;height:22.00px;background:#ffffff;"></div>
<div class="t" style="left:943.96px;top:934.52px;font-size:18.6px;font-weight:bold;color:#000;">1,133</div>
<div class="r" style="left:1075.53px;top:611.26px;width:74.89px;height:22.00px;background:#ffffff;"></div>
<div class="t" style="left:1084.52px;top:612.51px;font-size:18.6px;font-weight:bold;color:#000;">26,956</div>
<div class="r" style="left:1172.11px;top:930.62px;width:64.55px;height:22.00px;background:#ffffff;"></div>
<div class="t" style="left:1181.08px;top:931.87px;font-size:18.6px;font-weight:bold;color:#000;">1,346</div>
<div class="r" style="left:47.50px;top:299.60px;width:2812.50px;height:1.00px;background:#8c8c8c;"></div>
<div class="r" style="left:69.10px;top:1063.90px;width:1235.60px;height:33.60px;background:#4b4fd2;"></div>
<div class="t" style="left:484.10px;top:1068.64px;font-size:26.7px;font-weight:bold;color:#fff;transform-origin:0.00px 0;transform:scaleX(1.0575);">Breakeven Calculation ($'000)</div>
<div class="r" style="left:69.90px;top:1102.00px;width:1234.00px;height:31.75px;background:#6c70e6;"></div>
<div class="r" style="left:688.70px;top:1102.00px;width:1.50px;height:31.75px;background:#ffffff;"></div>
<div class="r" style="left:811.90px;top:1102.00px;width:1.50px;height:31.75px;background:#ffffff;"></div>
<div class="r" style="left:935.00px;top:1102.00px;width:1.50px;height:31.75px;background:#ffffff;"></div>
<div class="r" style="left:1058.00px;top:1102.00px;width:1.50px;height:31.75px;background:#ffffff;"></div>
<div class="r" style="left:1181.00px;top:1102.00px;width:1.50px;height:31.75px;background:#ffffff;"></div>
<div class="t" style="left:81.30px;top:1109.55px;font-size:18.6px;font-weight:bold;color:#fff;">Fiscal Year</div>
<div class="t" style="left:729.81px;top:1108.79px;font-size:19.5px;font-weight:bold;color:#fff;">2026</div>
<div class="t" style="left:852.81px;top:1108.79px;font-size:19.5px;font-weight:bold;color:#fff;">2027</div>
<div class="t" style="left:975.81px;top:1108.79px;font-size:19.5px;font-weight:bold;color:#fff;">2028</div>
<div class="t" style="left:1098.81px;top:1108.79px;font-size:19.5px;font-weight:bold;color:#fff;">2029</div>
<div class="t" style="left:1221.81px;top:1108.79px;font-size:19.5px;font-weight:bold;color:#fff;">2030</div>
<div class="r" style="left:69.10px;top:1139.10px;width:1235.50px;height:26.80px;background:#4bb2e6;"></div>
<div class="r" style="left:69.10px;top:1167.20px;width:1235.50px;height:27.30px;background:#4bb2e6;"></div>
<div class="r" style="left:69.10px;top:1258.00px;width:1235.50px;height:29.00px;background:#4bb2e6;"></div>
<div class="r" style="left:69.10px;top:1336.00px;width:1235.50px;height:28.60px;background:#4bb2e6;"></div>
<div class="r" style="left:69.10px;top:1436.10px;width:1235.50px;height:25.70px;background:#4bb2e6;"></div>
<div class="r" style="left:69.10px;top:1533.20px;width:1235.50px;height:28.70px;background:#4bb2e6;"></div>
<div class="r" style="left:69.10px;top:1611.20px;width:1235.50px;height:28.80px;background:#4bb2e6;"></div>
<div class="t" style="left:74.80px;top:1142.45px;font-size:21.2px;font-weight:bold;color:#ffffff;transform-origin:0.00px 0;transform:scaleX(1.0130);">Revenue Breakeven level (Annual)</div>
<div class="t" style="left:768.07px;top:1145.70px;font-size:17.6px;font-weight:bold;color:#ffffff;transform-origin:0.00px 0;transform:scaleX(1.1136);">614</div>
<div class="t" style="left:891.07px;top:1145.70px;font-size:17.6px;font-weight:bold;color:#ffffff;transform-origin:0.00px 0;transform:scaleX(1.1136);">697</div>
<div class="t" style="left:1014.07px;top:1145.70px;font-size:17.6px;font-weight:bold;color:#ffffff;transform-origin:0.00px 0;transform:scaleX(1.1136);">923</div>
<div class="t" style="left:1120.70px;top:1145.70px;font-size:17.6px;font-weight:bold;color:#ffffff;transform-origin:0.00px 0;transform:scaleX(1.1136);">1,133</div>
<div class="t" style="left:1243.70px;top:1145.70px;font-size:17.6px;font-weight:bold;color:#ffffff;transform-origin:0.00px 0;transform:scaleX(1.1136);">1,346</div>
<div class="t" style="left:74.80px;top:1170.15px;font-size:21.2px;font-weight:bold;color:#ffffff;transform-origin:0.00px 0;transform:scaleX(1.0167);">Revenue Breakeven level (Monthly)</div>
<div class="t" style="left:779.04px;top:1173.40px;font-size:17.6px;font-weight:bold;color:#ffffff;transform-origin:0.00px 0;transform:scaleX(1.1136);">51</div>
<div class="t" style="left:902.04px;top:1173.40px;font-size:17.6px;font-weight:bold;color:#ffffff;transform-origin:0.00px 0;transform:scaleX(1.1136);">58</div>
<div class="t" style="left:1025.04px;top:1173.40px;font-size:17.6px;font-weight:bold;color:#ffffff;transform-origin:0.00px 0;transform:scaleX(1.1136);">77</div>
<div class="t" style="left:1148.04px;top:1173.40px;font-size:17.6px;font-weight:bold;color:#ffffff;transform-origin:0.00px 0;transform:scaleX(1.1136);">94</div>
<div class="t" style="left:1261.15px;top:1173.40px;font-size:17.6px;font-weight:bold;color:#ffffff;transform-origin:0.00px 0;transform:scaleX(1.1136);">112</div>
<div class="t" style="left:90.40px;top:1217.54px;font-size:17.2px;color:#111111;transform-origin:0.00px 0;transform:scaleX(0.9668);">Revenue</div>
<div class="t" style="left:757.71px;top:1217.37px;font-size:17.4px;color:#111111;">1,185</div>
<div class="t" style="left:880.71px;top:1217.37px;font-size:17.4px;color:#111111;">3,970</div>
<div class="t" style="left:1003.71px;top:1217.37px;font-size:17.4px;color:#111111;">9,313</div>
<div class="t" style="left:1117.06px;top:1217.37px;font-size:17.4px;color:#111111;">17,226</div>
<div class="t" style="left:1240.06px;top:1217.37px;font-size:17.4px;color:#111111;">26,956</div>
<div class="t" style="left:90.40px;top:1239.04px;font-size:17.2px;color:#111111;transform-origin:0.00px 0;transform:scaleX(0.8983);">COGS</div>
<div class="t" style="left:764.28px;top:1238.87px;font-size:17.4px;color:#111111;transform-origin:0.00px 0;transform:scaleX(1.1170);">(118)</div>
<div class="t" style="left:885.97px;top:1238.87px;font-size:17.4px;color:#111111;transform-origin:0.00px 0;transform:scaleX(1.1132);">(337)</div>
<div class="t" style="left:1008.97px;top:1238.87px;font-size:17.4px;color:#111111;transform-origin:0.00px 0;transform:scaleX(1.1132);">(652)</div>
<div class="t" style="left:1117.44px;top:1238.87px;font-size:17.4px;color:#111111;transform-origin:0.00px 0;transform:scaleX(1.0834);">(1,085)</div>
<div class="t" style="left:1240.44px;top:1238.87px;font-size:17.4px;color:#111111;transform-origin:0.00px 0;transform:scaleX(1.0834);">(1,483)</div>
<div class="t" style="left:74.60px;top:1261.89px;font-size:20.8px;font-weight:bold;color:#ffffff;transform-origin:0.00px 0;transform:scaleX(0.9832);">Gross Margin</div>
<div class="t" style="left:751.70px;top:1264.80px;font-size:17.6px;font-weight:bold;color:#ffffff;transform-origin:0.00px 0;transform:scaleX(1.1136);">1,066</div>
<div class="t" style="left:874.70px;top:1264.80px;font-size:17.6px;font-weight:bold;color:#ffffff;transform-origin:0.00px 0;transform:scaleX(1.1136);">3,632</div>
<div class="t" style="left:997.70px;top:1264.80px;font-size:17.6px;font-weight:bold;color:#ffffff;transform-origin:0.00px 0;transform:scaleX(1.1136);">8,661</div>
<div class="t" style="left:1109.82px;top:1264.80px;font-size:17.6px;font-weight:bold;color:#ffffff;transform-origin:0.00px 0;transform:scaleX(1.1136);">16,140</div>
<div class="t" style="left:1232.82px;top:1264.80px;font-size:17.6px;font-weight:bold;color:#ffffff;transform-origin:0.00px 0;transform:scaleX(1.1136);">25,474</div>
<div class="t" style="left:75.20px;top:1292.25px;font-size:18.6px;font-weight:bold;font-style:italic;color:#1a1a1a;transform-origin:0.00px 0;transform:scaleX(1.0153);">Gross Margin %</div>
<div class="t" style="left:746.60px;top:1293.10px;font-size:17.6px;font-weight:bold;font-style:italic;color:#1a1a1a;transform-origin:0.00px 0;transform:scaleX(1.2105);">90.0%</div>
<div class="t" style="left:869.60px;top:1293.10px;font-size:17.6px;font-weight:bold;font-style:italic;color:#1a1a1a;transform-origin:0.00px 0;transform:scaleX(1.2105);">91.5%</div>
<div class="t" style="left:992.60px;top:1293.10px;font-size:17.6px;font-weight:bold;font-style:italic;color:#1a1a1a;transform-origin:0.00px 0;transform:scaleX(1.2105);">93.0%</div>
<div class="t" style="left:1115.60px;top:1293.10px;font-size:17.6px;font-weight:bold;font-style:italic;color:#1a1a1a;transform-origin:0.00px 0;transform:scaleX(1.2105);">93.7%</div>
<div class="t" style="left:1238.60px;top:1293.10px;font-size:17.6px;font-weight:bold;font-style:italic;color:#1a1a1a;transform-origin:0.00px 0;transform:scaleX(1.2105);">94.5%</div>
<div class="t" style="left:90.40px;top:1317.24px;font-size:17.2px;color:#111111;transform-origin:0.00px 0;transform:scaleX(0.9855);">Variable Expenses</div>
<div class="t" style="left:772.63px;top:1317.07px;font-size:17.4px;color:#111111;transform-origin:0.00px 0;transform:scaleX(1.1485);">(95)</div>
<div class="t" style="left:885.97px;top:1317.07px;font-size:17.4px;color:#111111;transform-origin:0.00px 0;transform:scaleX(1.1132);">(258)</div>
<div class="t" style="left:1008.97px;top:1317.07px;font-size:17.4px;color:#111111;transform-origin:0.00px 0;transform:scaleX(1.1132);">(466)</div>
<div class="t" style="left:1131.97px;top:1317.07px;font-size:17.4px;color:#111111;transform-origin:0.00px 0;transform:scaleX(1.1132);">(689)</div>
<div class="t" style="left:1254.97px;top:1317.07px;font-size:17.4px;color:#111111;transform-origin:0.00px 0;transform:scaleX(1.1132);">(809)</div>
<div class="t" style="left:74.60px;top:1340.39px;font-size:20.8px;font-weight:bold;color:#ffffff;transform-origin:0.00px 0;transform:scaleX(1.0154);">Contribution Margin</div>
<div class="t" style="left:768.07px;top:1343.30px;font-size:17.6px;font-weight:bold;color:#ffffff;transform-origin:0.00px 0;transform:scaleX(1.1136);">972</div>
<div class="t" style="left:874.70px;top:1343.30px;font-size:17.6px;font-weight:bold;color:#ffffff;transform-origin:0.00px 0;transform:scaleX(1.1136);">3,374</div>
<div class="t" style="left:997.70px;top:1343.30px;font-size:17.6px;font-weight:bold;color:#ffffff;transform-origin:0.00px 0;transform:scaleX(1.1136);">8,196</div>
<div class="t" style="left:1109.82px;top:1343.30px;font-size:17.6px;font-weight:bold;color:#ffffff;transform-origin:0.00px 0;transform:scaleX(1.1136);">15,451</div>
<div class="t" style="left:1232.82px;top:1343.30px;font-size:17.6px;font-weight:bold;color:#ffffff;transform-origin:0.00px 0;transform:scaleX(1.1136);">24,665</div>
<div class="t" style="left:75.20px;top:1369.45px;font-size:18.6px;font-weight:bold;font-style:italic;color:#1a1a1a;transform-origin:0.00px 0;transform:scaleX(1.0372);">Contribution Margin %</div>
<div class="t" style="left:746.60px;top:1370.30px;font-size:17.6px;font-weight:bold;font-style:italic;color:#1a1a1a;transform-origin:0.00px 0;transform:scaleX(1.2105);">82.0%</div>
<div class="t" style="left:869.60px;top:1370.30px;font-size:17.6px;font-weight:bold;font-style:italic;color:#1a1a1a;transform-origin:0.00px 0;transform:scaleX(1.2105);">85.0%</div>
<div class="t" style="left:992.60px;top:1370.30px;font-size:17.6px;font-weight:bold;font-style:italic;color:#1a1a1a;transform-origin:0.00px 0;transform:scaleX(1.2105);">88.0%</div>
<div class="t" style="left:1115.60px;top:1370.30px;font-size:17.6px;font-weight:bold;font-style:italic;color:#1a1a1a;transform-origin:0.00px 0;transform:scaleX(1.2105);">89.7%</div>
<div class="t" style="left:1238.60px;top:1370.30px;font-size:17.6px;font-weight:bold;font-style:italic;color:#1a1a1a;transform-origin:0.00px 0;transform:scaleX(1.2105);">91.5%</div>
<div class="t" style="left:90.40px;top:1394.44px;font-size:17.2px;color:#111111;transform-origin:0.00px 0;transform:scaleX(0.9807);">Payroll Expenses</div>
<div class="t" style="left:762.97px;top:1394.27px;font-size:17.4px;color:#111111;transform-origin:0.00px 0;transform:scaleX(1.1132);">(393)</div>
<div class="t" style="left:885.97px;top:1394.27px;font-size:17.4px;color:#111111;transform-origin:0.00px 0;transform:scaleX(1.1132);">(482)</div>
<div class="t" style="left:1008.97px;top:1394.27px;font-size:17.4px;color:#111111;transform-origin:0.00px 0;transform:scaleX(1.1132);">(705)</div>
<div class="t" style="left:1131.97px;top:1394.27px;font-size:17.4px;color:#111111;transform-origin:0.00px 0;transform:scaleX(1.1132);">(912)</div>
<div class="t" style="left:1240.44px;top:1394.27px;font-size:17.4px;color:#111111;transform-origin:0.00px 0;transform:scaleX(1.0834);">(1,131)</div>
<div class="t" style="left:90.40px;top:1417.04px;font-size:17.2px;color:#111111;transform-origin:0.00px 0;transform:scaleX(0.9757);">Fixed Expenses</div>
<div class="t" style="left:772.63px;top:1416.87px;font-size:17.4px;color:#111111;transform-origin:0.00px 0;transform:scaleX(1.1485);">(88)</div>
<div class="t" style="left:895.63px;top:1416.87px;font-size:17.4px;color:#111111;transform-origin:0.00px 0;transform:scaleX(1.1485);">(88)</div>
<div class="t" style="left:1018.63px;top:1416.87px;font-size:17.4px;color:#111111;transform-origin:0.00px 0;transform:scaleX(1.1485);">(88)</div>
<div class="t" style="left:1141.63px;top:1416.87px;font-size:17.4px;color:#111111;transform-origin:0.00px 0;transform:scaleX(1.1485);">(88)</div>
<div class="t" style="left:1264.63px;top:1416.87px;font-size:17.4px;color:#111111;transform-origin:0.00px 0;transform:scaleX(1.1485);">(88)</div>
<div class="t" style="left:74.80px;top:1439.29px;font-size:20.8px;font-weight:bold;color:#ffffff;transform-origin:0.00px 0;transform:scaleX(0.9796);">EBITDA</div>
<div class="t" style="left:768.07px;top:1442.20px;font-size:17.6px;font-weight:bold;color:#ffffff;transform-origin:0.00px 0;transform:scaleX(1.1136);">491</div>
<div class="t" style="left:874.70px;top:1442.20px;font-size:17.6px;font-weight:bold;color:#ffffff;transform-origin:0.00px 0;transform:scaleX(1.1136);">2,804</div>
<div class="t" style="left:997.70px;top:1442.20px;font-size:17.6px;font-weight:bold;color:#ffffff;transform-origin:0.00px 0;transform:scaleX(1.1136);">7,403</div>
<div class="t" style="left:1109.82px;top:1442.20px;font-size:17.6px;font-weight:bold;color:#ffffff;transform-origin:0.00px 0;transform:scaleX(1.1136);">14,451</div>
<div class="t" style="left:1232.82px;top:1442.20px;font-size:17.6px;font-weight:bold;color:#ffffff;transform-origin:0.00px 0;transform:scaleX(1.1136);">23,446</div>
<div class="t" style="left:75.00px;top:1466.65px;font-size:18.6px;font-weight:bold;font-style:italic;color:#1a1a1a;transform-origin:0.00px 0;transform:scaleX(1.0487);">EBITDA %</div>
<div class="t" style="left:746.95px;top:1467.50px;font-size:17.6px;font-weight:bold;font-style:italic;color:#1a1a1a;transform-origin:-0.35px 0;transform:scaleX(1.2020);">41.4%</div>
<div class="t" style="left:869.60px;top:1467.50px;font-size:17.6px;font-weight:bold;font-style:italic;color:#1a1a1a;transform-origin:0.00px 0;transform:scaleX(1.2105);">70.6%</div>
<div class="t" style="left:992.60px;top:1467.50px;font-size:17.6px;font-weight:bold;font-style:italic;color:#1a1a1a;transform-origin:0.00px 0;transform:scaleX(1.2105);">79.5%</div>
<div class="t" style="left:1115.60px;top:1467.50px;font-size:17.6px;font-weight:bold;font-style:italic;color:#1a1a1a;transform-origin:0.00px 0;transform:scaleX(1.2105);">83.9%</div>
<div class="t" style="left:1238.60px;top:1467.50px;font-size:17.6px;font-weight:bold;font-style:italic;color:#1a1a1a;transform-origin:0.00px 0;transform:scaleX(1.2105);">87.0%</div>
<div class="t" style="left:90.40px;top:1491.94px;font-size:17.2px;color:#111111;transform-origin:0.00px 0;transform:scaleX(1.0299);">Depreciation &amp; Amortization</div>
<div class="t" style="left:782.37px;top:1491.77px;font-size:17.4px;color:#111111;transform-origin:0.00px 0;transform:scaleX(1.2167);">(5)</div>
<div class="t" style="left:905.37px;top:1491.77px;font-size:17.4px;color:#111111;transform-origin:0.00px 0;transform:scaleX(1.2167);">(5)</div>
<div class="t" style="left:1028.37px;top:1491.77px;font-size:17.4px;color:#111111;transform-origin:0.00px 0;transform:scaleX(1.2167);">(5)</div>
<div class="t" style="left:1151.37px;top:1491.77px;font-size:17.4px;color:#111111;transform-origin:0.00px 0;transform:scaleX(1.2167);">(5)</div>
<div class="t" style="left:1274.37px;top:1491.77px;font-size:17.4px;color:#111111;transform-origin:0.00px 0;transform:scaleX(1.2167);">(5)</div>
<div class="t" style="left:90.40px;top:1513.64px;font-size:17.2px;color:#111111;transform-origin:0.00px 0;transform:scaleX(1.0195);">Interest Expense</div>
<div class="t" style="left:772.63px;top:1513.47px;font-size:17.4px;color:#111111;transform-origin:0.00px 0;transform:scaleX(1.1485);">(18)</div>
<div class="t" style="left:895.63px;top:1513.47px;font-size:17.4px;color:#111111;transform-origin:0.00px 0;transform:scaleX(1.1485);">(17)</div>
<div class="t" style="left:1018.63px;top:1513.47px;font-size:17.4px;color:#111111;transform-origin:0.00px 0;transform:scaleX(1.1485);">(14)</div>
<div class="t" style="left:1142.93px;top:1513.47px;font-size:17.4px;color:#111111;transform-origin:0.00px 0;transform:scaleX(1.1551);">(11)</div>
<div class="t" style="left:1274.37px;top:1513.47px;font-size:17.4px;color:#111111;transform-origin:0.00px 0;transform:scaleX(1.2167);">(7)</div>
<div class="t" style="left:75.00px;top:1536.69px;font-size:20.8px;font-weight:bold;color:#ffffff;transform-origin:0.00px 0;transform:scaleX(1.0258);">Net Profit Before Tax</div>
<div class="t" style="left:768.07px;top:1539.60px;font-size:17.6px;font-weight:bold;color:#ffffff;transform-origin:0.00px 0;transform:scaleX(1.1136);">468</div>
<div class="t" style="left:874.70px;top:1539.60px;font-size:17.6px;font-weight:bold;color:#ffffff;transform-origin:0.00px 0;transform:scaleX(1.1136);">2,782</div>
<div class="t" style="left:997.70px;top:1539.60px;font-size:17.6px;font-weight:bold;color:#ffffff;transform-origin:0.00px 0;transform:scaleX(1.1136);">7,383</div>
<div class="t" style="left:1109.82px;top:1539.60px;font-size:17.6px;font-weight:bold;color:#ffffff;transform-origin:0.00px 0;transform:scaleX(1.1136);">14,435</div>
<div class="t" style="left:1232.82px;top:1539.60px;font-size:17.6px;font-weight:bold;color:#ffffff;transform-origin:0.00px 0;transform:scaleX(1.1136);">23,433</div>
<div class="t" style="left:75.00px;top:1566.85px;font-size:18.6px;font-weight:bold;font-style:italic;color:#1a1a1a;transform-origin:0.00px 0;transform:scaleX(1.0486);">Net Profit Before Tax %</div>
<div class="t" style="left:746.60px;top:1567.70px;font-size:17.6px;font-weight:bold;font-style:italic;color:#1a1a1a;transform-origin:0.00px 0;transform:scaleX(1.2105);">39.5%</div>
<div class="t" style="left:869.60px;top:1567.70px;font-size:17.6px;font-weight:bold;font-style:italic;color:#1a1a1a;transform-origin:0.00px 0;transform:scaleX(1.2105);">70.1%</div>
<div class="t" style="left:992.60px;top:1567.70px;font-size:17.6px;font-weight:bold;font-style:italic;color:#1a1a1a;transform-origin:0.00px 0;transform:scaleX(1.2105);">79.3%</div>
<div class="t" style="left:1115.60px;top:1567.70px;font-size:17.6px;font-weight:bold;font-style:italic;color:#1a1a1a;transform-origin:0.00px 0;transform:scaleX(1.2105);">83.8%</div>
<div class="t" style="left:1238.60px;top:1567.70px;font-size:17.6px;font-weight:bold;font-style:italic;color:#1a1a1a;transform-origin:0.00px 0;transform:scaleX(1.2105);">86.9%</div>
<div class="t" style="left:90.40px;top:1592.14px;font-size:17.2px;color:#111111;transform-origin:0.00px 0;transform:scaleX(1.0179);">Corporate Tax Expense</div>
<div class="t" style="left:764.28px;top:1591.97px;font-size:17.4px;color:#111111;transform-origin:0.00px 0;transform:scaleX(1.1170);">(117)</div>
<div class="t" style="left:885.97px;top:1591.97px;font-size:17.4px;color:#111111;transform-origin:0.00px 0;transform:scaleX(1.1132);">(695)</div>
<div class="t" style="left:994.44px;top:1591.97px;font-size:17.4px;color:#111111;transform-origin:0.00px 0;transform:scaleX(1.0834);">(1,846)</div>
<div class="t" style="left:1117.44px;top:1591.97px;font-size:17.4px;color:#111111;transform-origin:0.00px 0;transform:scaleX(1.0834);">(3,609)</div>
<div class="t" style="left:1240.44px;top:1591.97px;font-size:17.4px;color:#111111;transform-origin:0.00px 0;transform:scaleX(1.0834);">(5,858)</div>
<div class="t" style="left:75.00px;top:1614.39px;font-size:20.8px;font-weight:bold;color:#ffffff;transform-origin:0.00px 0;transform:scaleX(1.0401);">Net Profit After Tax</div>
<div class="t" style="left:768.07px;top:1617.30px;font-size:17.6px;font-weight:bold;color:#ffffff;transform-origin:0.00px 0;transform:scaleX(1.1136);">351</div>
<div class="t" style="left:874.70px;top:1617.30px;font-size:17.6px;font-weight:bold;color:#ffffff;transform-origin:0.00px 0;transform:scaleX(1.1136);">2,086</div>
<div class="t" style="left:997.70px;top:1617.30px;font-size:17.6px;font-weight:bold;color:#ffffff;transform-origin:0.00px 0;transform:scaleX(1.1136);">5,538</div>
<div class="t" style="left:1109.82px;top:1617.30px;font-size:17.6px;font-weight:bold;color:#ffffff;transform-origin:0.00px 0;transform:scaleX(1.1136);">10,826</div>
<div class="t" style="left:1232.82px;top:1617.30px;font-size:17.6px;font-weight:bold;color:#ffffff;transform-origin:0.00px 0;transform:scaleX(1.1136);">17,575</div>
<div class="t" style="left:75.00px;top:1644.45px;font-size:18.6px;font-weight:bold;font-style:italic;color:#1a1a1a;transform-origin:0.00px 0;transform:scaleX(1.0574);">Net Profit After Tax %</div>
<div class="t" style="left:746.95px;top:1645.30px;font-size:17.6px;font-weight:bold;font-style:italic;color:#1a1a1a;transform-origin:-0.35px 0;transform:scaleX(1.2020);">29.6%</div>
<div class="t" style="left:869.60px;top:1645.30px;font-size:17.6px;font-weight:bold;font-style:italic;color:#1a1a1a;transform-origin:0.00px 0;transform:scaleX(1.2105);">52.6%</div>
<div class="t" style="left:992.60px;top:1645.30px;font-size:17.6px;font-weight:bold;font-style:italic;color:#1a1a1a;transform-origin:0.00px 0;transform:scaleX(1.2105);">59.5%</div>
<div class="t" style="left:1115.60px;top:1645.30px;font-size:17.6px;font-weight:bold;font-style:italic;color:#1a1a1a;transform-origin:0.00px 0;transform:scaleX(1.2105);">62.9%</div>
<div class="t" style="left:1238.60px;top:1645.30px;font-size:17.6px;font-weight:bold;font-style:italic;color:#1a1a1a;transform-origin:0.00px 0;transform:scaleX(1.2105);">65.2%</div>
</body></html>
